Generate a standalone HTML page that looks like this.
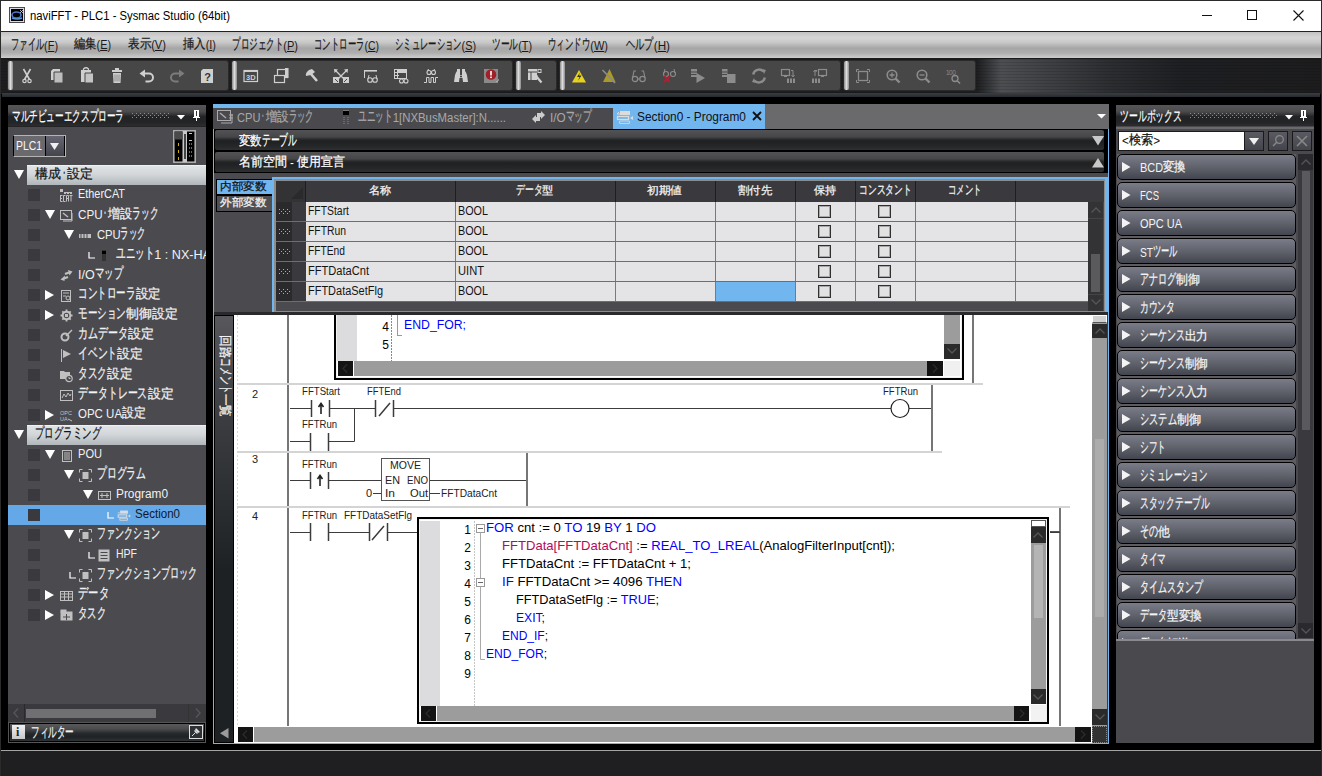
<!DOCTYPE html><html><head><meta charset='utf-8'><style>
*{box-sizing:border-box;margin:0;padding:0}
html,body{width:1322px;height:776px;overflow:hidden;background:#000;font-family:"Liberation Sans",sans-serif;font-size:12px}
.a{position:absolute}
.t{position:absolute;white-space:pre}
svg{position:absolute;overflow:visible}
</style></head><body>
<div class='a' style='left:0px;top:0px;width:1322px;height:31px;background:#fff'></div>
<div class='a' style='left:0px;top:0px;width:1322px;height:1px;background:#2b2b2b'></div>
<div class='a' style='left:0px;top:0px;width:1px;height:776px;background:#2b2b2b'></div>
<div class='a' style='left:1321px;top:0px;width:1px;height:776px;background:#2b2b2b'></div>
<svg style='left:9px;top:7px' width='16' height='16'><rect x='0.5' y='0.5' width='15' height='15' fill='#d8d8e0' stroke='#4a4a50'/><rect x='2' y='2' width='12' height='12' fill='#000'/><ellipse cx='7.5' cy='8' rx='4.5' ry='3' fill='none' stroke='#4a7ac8' stroke-width='1.6'/><path d='M3 11 Q8 13 13 11' stroke='#5a9ad8' stroke-width='1.5' fill='none'/><path d='M11 3 L14 6 M14 3 L11 6' stroke='#ddd' stroke-width='0.8'/></svg>
<div class='a' style='left:1202px;top:15px;width:10px;height:1px;background:#111'></div>
<div class='a' style='left:1247px;top:10px;width:10px;height:10px;border:1px solid #111'></div>
<svg style='left:1293px;top:10px' width='11' height='11'><path d='M0.5 0.5 L10.5 10.5 M10.5 0.5 L0.5 10.5' stroke='#111' stroke-width='1.1'/></svg>
<div class='a' style='left:1px;top:31px;width:1320px;height:1px;background:#222'></div>
<div class='a' style='left:1px;top:32px;width:1320px;height:26px;background:linear-gradient(#c2c2c2 0%,#d6d6d6 22%,#c8c8c8 40%,#a6a6a6 62%,#aeaeae 80%,#cdcdcd 100%)'></div>
<div class='a' style='left:1px;top:58px;width:1320px;height:1px;background:#1a1a1a'></div>
<div class='a' style='left:1px;top:59px;width:1320px;height:35px;background:repeating-linear-gradient(rgba(0,0,0,0.12) 0 1px,transparent 1px 3px),linear-gradient(90deg,#1e1e20 0px,#1e1e20 976px,#4c4e52 1000px,#404246 1040px,#2c2d30 1110px,#1e1f22 1180px,#1c1c1e 1322px)'></div>
<div class='a' style='left:7px;top:60px;width:222px;height:31px;background:#474747;border:1px solid #2a2a2a;border-radius:3px'></div>
<div class='a' style='left:8px;top:61px;width:5px;height:29px;background:linear-gradient(90deg,#8a8a8a,#dcdcdc 50%,#8a8a8a);border-radius:2px'></div>
<div class='a' style='left:231px;top:60px;width:282px;height:31px;background:#474747;border:1px solid #2a2a2a;border-radius:3px'></div>
<div class='a' style='left:232px;top:61px;width:5px;height:29px;background:linear-gradient(90deg,#8a8a8a,#dcdcdc 50%,#8a8a8a);border-radius:2px'></div>
<div class='a' style='left:515px;top:60px;width:42px;height:31px;background:#474747;border:1px solid #2a2a2a;border-radius:3px'></div>
<div class='a' style='left:516px;top:61px;width:5px;height:29px;background:linear-gradient(90deg,#8a8a8a,#dcdcdc 50%,#8a8a8a);border-radius:2px'></div>
<div class='a' style='left:559px;top:60px;width:282px;height:31px;background:#474747;border:1px solid #2a2a2a;border-radius:3px'></div>
<div class='a' style='left:560px;top:61px;width:5px;height:29px;background:linear-gradient(90deg,#8a8a8a,#dcdcdc 50%,#8a8a8a);border-radius:2px'></div>
<div class='a' style='left:843px;top:60px;width:133px;height:31px;background:#474747;border:1px solid #2a2a2a;border-radius:3px'></div>
<div class='a' style='left:844px;top:61px;width:5px;height:29px;background:linear-gradient(90deg,#8a8a8a,#dcdcdc 50%,#8a8a8a);border-radius:2px'></div>
<div class='a' style='left:2px;top:93px;width:1318px;height:4px;background:linear-gradient(#3a3e42,#262a2e)'></div>
<svg style='left:17px;top:66px' width='20' height='20'><path d='M6.5 3 L12.5 13.5 M13.5 3 L7.5 13.5' stroke='#cfcfcf' stroke-width='1.6'/><circle cx='7.5' cy='15' r='1.7' fill='none' stroke='#cfcfcf' stroke-width='1.2'/><circle cx='12.5' cy='15' r='1.7' fill='none' stroke='#cfcfcf' stroke-width='1.2'/></svg>
<svg style='left:47px;top:66px' width='20' height='20'><path d='M6 3 H13 V14 H4 V5 Z' fill='#cfcfcf'/><path d='M7 6 H16 V17 H7 Z' fill='#bdbdbd' stroke='#474747' stroke-width='1'/></svg>
<svg style='left:77px;top:66px' width='20' height='20'><path d='M4 4 H14 V16 H4 Z' fill='#cfcfcf'/><path d='M6.5 3 Q9 0.5 11.5 3 V5 H6.5 Z' fill='none' stroke='#cfcfcf' stroke-width='1.2'/><path d='M8 7 H16.5 V17 H8 Z' fill='#c4c4c4' stroke='#474747'/></svg>
<svg style='left:107px;top:66px' width='20' height='20'><rect x='5' y='4' width='10' height='2' fill='#cfcfcf'/><rect x='8' y='2' width='4' height='2' fill='#cfcfcf'/><path d='M6 7 H14 L13.5 17 H6.5 Z' fill='#cfcfcf'/><path d='M8 8.5 V15.5 M10 8.5 V15.5 M12 8.5 V15.5' stroke='#8a8a8a'/></svg>
<svg style='left:137px;top:66px' width='20' height='20'><path d='M2.5 7.5 L8 3.5 V11.5 Z' fill='#cfcfcf'/><path d='M7 7.5 H12 A4 4 0 0 1 12 15.5 H8.5' stroke='#cfcfcf' stroke-width='2' fill='none'/></svg>
<svg style='left:167px;top:66px' width='20' height='20'><path d='M17.5 7.5 L12 3.5 V11.5 Z' fill='#7c7c7c'/><path d='M13 7.5 H8 A4 4 0 0 0 8 15.5 H11.5' stroke='#7c7c7c' stroke-width='2' fill='none'/></svg>
<svg style='left:197px;top:66px' width='20' height='20'><path d='M6 3 H16 V17 H4 V5 Z' fill='#cfcfcf'/><text x='10.5' y='15' font-size='11' font-weight='bold' text-anchor='middle' fill='#333' font-family='Liberation Sans'>?</text></svg>
<svg style='left:241px;top:66px' width='20' height='20'><rect x='3' y='4.5' width='13.5' height='11' fill='none' stroke='#cfcfcf' stroke-width='1.2'/><rect x='3' y='4' width='14' height='2' fill='#cfcfcf'/><text x='9.8' y='14.3' font-size='7.5' font-weight='bold' text-anchor='middle' fill='#cfcfcf' font-family='Liberation Sans'>3D</text></svg>
<svg style='left:271px;top:66px' width='20' height='20'><rect x='6.5' y='3.5' width='10' height='8' fill='none' stroke='#cfcfcf' stroke-width='1.2'/><rect x='3.5' y='9.5' width='10' height='7' fill='#474747' stroke='#cfcfcf' stroke-width='1.2'/><rect x='14' y='2' width='3.5' height='10' fill='#cfcfcf'/></svg>
<svg style='left:301px;top:66px' width='20' height='20'><path d='M5 10 Q4 7 8 4 L11 3 L14 6 L10 9 Z' fill='#cfcfcf'/><path d='M10 8 L16 15' stroke='#cfcfcf' stroke-width='2.6'/></svg>
<svg style='left:331px;top:66px' width='20' height='20'><path d='M4 4 L16 16 M16 4 L4 16' stroke='#cfcfcf' stroke-width='1.3'/><path d='M3 3 L7 3.5 L3.5 7 Z M17 3 L13 3.5 L16.5 7 Z' fill='#cfcfcf'/><rect x='2' y='11' width='6' height='6' fill='#cfcfcf'/><rect x='12' y='11' width='6' height='6' fill='#cfcfcf'/><path d='M4 13 L7 16 M16 13 L13 16' stroke='#474747'/></svg>
<svg style='left:361px;top:66px' width='20' height='20'><rect x='3' y='4' width='13' height='1.6' fill='#cfcfcf'/><path d='M3.5 4 V12' stroke='#cfcfcf'/><circle cx='9' cy='14' r='2.3' fill='none' stroke='#cfcfcf' stroke-width='1.1'/><circle cx='14' cy='14' r='2.3' fill='none' stroke='#cfcfcf' stroke-width='1.1'/><path d='M7 13 L8 9 M16 13 L15 9' stroke='#cfcfcf'/></svg>
<svg style='left:391px;top:66px' width='20' height='20'><rect x='3.5' y='3.5' width='12' height='9' fill='none' stroke='#cfcfcf'/><path d='M3.5 6.5 H15.5 M3.5 9.5 H8 M6.5 3.5 V12.5' stroke='#cfcfcf'/><rect x='7' y='4' width='8.5' height='2' fill='#cfcfcf'/><circle cx='10.5' cy='15' r='2' fill='#474747' stroke='#cfcfcf' stroke-width='1.1'/><circle cx='15' cy='15' r='2' fill='#474747' stroke='#cfcfcf' stroke-width='1.1'/></svg>
<svg style='left:421px;top:66px' width='20' height='20'><circle cx='8' cy='6.5' r='2' fill='none' stroke='#cfcfcf' stroke-width='1.1'/><circle cx='12.5' cy='6.5' r='2' fill='none' stroke='#cfcfcf' stroke-width='1.1'/><path d='M6.5 5 L7.5 3 M14 5 L13 3' stroke='#cfcfcf'/><path d='M3 16.5 H5.5 V11.5 H8 V16.5 H10 V11.5 H12.5 V16.5 H14.5 V11.5 H17' stroke='#cfcfcf' fill='none'/></svg>
<svg style='left:451px;top:66px' width='20' height='20'><path d='M3 16 L4 9 Q5 6 6 5 V3 H9 V9 H11 V3 H14 V5 Q15 6 16 9 L17 16 H12 L11.5 12 H8.5 L8 16 Z' fill='#cfcfcf'/><circle cx='10' cy='10.5' r='1' fill='#333'/></svg>
<svg style='left:481px;top:66px' width='20' height='20'><rect x='3' y='3' width='14' height='14' fill='#8a8a8a'/><circle cx='10' cy='8.5' r='5.3' fill='#a0202a'/><rect x='9.2' y='5' width='1.6' height='4.5' fill='#fff'/><rect x='9.2' y='10.5' width='1.6' height='1.6' fill='#fff'/><path d='M15 15 h2 v-2' stroke='#ccc'/></svg>
<svg style='left:525px;top:66px' width='20' height='20'><rect x='3' y='3' width='9' height='11' fill='#cfcfcf'/><path d='M3 6 H12 M6 6 V14' stroke='#474747'/><rect x='13' y='3.5' width='3' height='3' fill='none' stroke='#cfcfcf'/><path d='M7 13 Q8 10 11 8 L13 10 L10 12 Z' fill='#cfcfcf'/><path d='M11 10 L16.5 16.5' stroke='#cfcfcf' stroke-width='2.2'/></svg>
<svg style='left:569px;top:66px' width='20' height='20'><path d='M10 4 L17 16.5 H3 Z' fill='#e8d21e'/><path d='M11 6.5 L8 11 H10.5 L9 15 L12.5 9.5 H10 Z' fill='#333'/></svg>
<svg style='left:599px;top:66px' width='20' height='20'><path d='M10.5 3 L16.5 16 H4 Z' fill='#aa9a2a'/><path d='M3.5 4 L16 17' stroke='#8a8a8a' stroke-width='1.8'/></svg>
<svg style='left:629px;top:66px' width='20' height='20'><circle cx='6' cy='13' r='2.7' fill='none' stroke='#8c8c8c' stroke-width='1.2'/><circle cx='13.5' cy='13' r='2.7' fill='none' stroke='#8c8c8c' stroke-width='1.2'/><path d='M8.7 13 H10.8 M3.5 12 L5 5 H7 M16 12 L14.5 5 H12.5' stroke='#8c8c8c' fill='none' stroke-width='1.1'/></svg>
<svg style='left:659px;top:66px' width='20' height='20'><circle cx='7' cy='8' r='2.5' fill='none' stroke='#8c8c8c' stroke-width='1.1'/><circle cx='14' cy='8' r='2.5' fill='none' stroke='#8c8c8c' stroke-width='1.1'/><path d='M5 7 L6 3 M16 7 L15 3' stroke='#8c8c8c'/><path d='M5 10 L11 16 M11 10 L5 16' stroke='#b02030' stroke-width='1.8'/></svg>
<svg style='left:689px;top:66px' width='20' height='20'><rect x='2' y='3' width='6' height='8' fill='#8c8c8c'/><path d='M2 6 H8 M2 8.5 H8' stroke='#474747'/><path d='M7.5 7 L16 12 L7.5 17 Z' fill='#8c8c8c'/></svg>
<svg style='left:719px;top:66px' width='20' height='20'><rect x='3' y='3' width='5.5' height='8' fill='#8c8c8c'/><path d='M3 6 H8.5 M3 8.5 H8.5' stroke='#474747'/><rect x='8' y='8' width='8.5' height='9' fill='#8c8c8c'/></svg>
<svg style='left:749px;top:66px' width='20' height='20'><path d='M4.2 8.5 A6 6 0 0 1 14.5 5.5' stroke='#8c8c8c' stroke-width='2.4' fill='none'/><path d='M15.8 11.5 A6 6 0 0 1 5.5 14.5' stroke='#8c8c8c' stroke-width='2.4' fill='none'/><path d='M13 3 L17 4 L15 8 Z M7 17 L3 16 L5 12 Z' fill='#8c8c8c'/></svg>
<svg style='left:779px;top:66px' width='20' height='20'><rect x='2.5' y='3.5' width='8' height='6' fill='none' stroke='#8c8c8c' stroke-width='1.2'/><path d='M5 10.5 H8' stroke='#8c8c8c'/><path d='M12 4.5 H14 V10' stroke='#8c8c8c' fill='none'/><path d='M12.5 9 L14 11 L15.5 9' stroke='#8c8c8c' fill='none'/><path d='M8 12.5 h2 v4.5 h-2z M11 12.5 h2 v4.5 h-2z M14 12.5 h2 v4.5 h-2z' fill='#8c8c8c'/></svg>
<svg style='left:809px;top:66px' width='20' height='20'><rect x='9.5' y='3.5' width='8' height='6' fill='none' stroke='#8c8c8c' stroke-width='1.2'/><path d='M12 10.5 H15' stroke='#8c8c8c'/><path d='M8 4.5 H6 V10' stroke='#8c8c8c' fill='none'/><path d='M4.5 6 L6 4 L7.5 6' stroke='#8c8c8c' fill='none'/><path d='M3 12.5 h2 v4.5 h-2z M6 12.5 h2 v4.5 h-2z M9 12.5 h2 v4.5 h-2z' fill='#8c8c8c'/></svg>
<svg style='left:853px;top:66px' width='20' height='20'><rect x='5.5' y='5.5' width='9' height='9' fill='none' stroke='#8c8c8c' stroke-width='1.3'/><path d='M3.5 6 V3.5 H6 M14 3.5 H16.5 V6 M16.5 14 V16.5 H14 M6 16.5 H3.5 V14' stroke='#8c8c8c' fill='none'/></svg>
<svg style='left:883px;top:66px' width='20' height='20'><circle cx='9' cy='9' r='4.8' fill='none' stroke='#8c8c8c' stroke-width='1.6'/><path d='M12.5 12.5 L16.5 16.5' stroke='#8c8c8c' stroke-width='2.4'/><path d='M6.5 9 H11.5 M9 6.5 V11.5' stroke='#8c8c8c' stroke-width='1.3'/></svg>
<svg style='left:913px;top:66px' width='20' height='20'><circle cx='9' cy='9' r='4.8' fill='none' stroke='#8c8c8c' stroke-width='1.6'/><path d='M12.5 12.5 L16.5 16.5' stroke='#8c8c8c' stroke-width='2.4'/><path d='M6.5 9 H11.5' stroke='#8c8c8c' stroke-width='1.3'/></svg>
<svg style='left:943px;top:66px' width='20' height='20'><text x='3' y='8.5' font-size='6.5' fill='#8c8c8c' font-family='Liberation Sans' letter-spacing='-0.5'>100</text><circle cx='12' cy='12.5' r='3' fill='none' stroke='#8c8c8c' stroke-width='1.3'/><path d='M14 14.5 L17 17.5' stroke='#8c8c8c' stroke-width='1.6'/></svg>
<div class='a' style='left:8px;top:105px;width:198px;height:638px;background:#4b4a4f'></div>
<div class='a' style='left:8px;top:105px;width:198px;height:21px;background:linear-gradient(#565658 0%,#4c4c4e 30%,#3a3a3c 42%,#222426 55%,#222426 80%,#2a2c2e 100%)'></div>
<svg style='left:132px;top:113px' width='38' height='6'><path d='M0 0.5h1M4 0.5h1M8 0.5h1M12 0.5h1M16 0.5h1M20 0.5h1M24 0.5h1M28 0.5h1M32 0.5h1M36 0.5h1M2 2.5h1M6 2.5h1M10 2.5h1M14 2.5h1M18 2.5h1M22 2.5h1M26 2.5h1M30 2.5h1M34 2.5h1M0 4.5h1M4 4.5h1M8 4.5h1M12 4.5h1M16 4.5h1M20 4.5h1M24 4.5h1M28 4.5h1M32 4.5h1M36 4.5h1' stroke='#8c8c8e' stroke-width='1'/></svg>
<svg style='left:177px;top:115px' width='9' height='5'><path d='M0 0 H8 L4 4.5 Z' fill='#fff'/></svg>
<svg style='left:193px;top:110px' width='8' height='11'><rect x='1' y='0' width='5' height='7' fill='#fff'/><path d='M3.5 1 V6' stroke='#333'/><path d='M0 7.5 H7 M3.5 7 V11' stroke='#fff'/></svg>
<div class='a' style='left:8px;top:126px;width:198px;height:1px;background:#242426'></div>
<div class='a' style='left:13px;top:135px;width:53px;height:22px;background:#6a6a6e;border:1px solid #b4b4b4;border-left:1px solid #000'></div>
<div class='a' style='left:45px;top:136px;width:20px;height:20px;background:linear-gradient(#666672,#44444e);border-left:1px solid #000;border-right:1px solid #000'></div>
<svg style='left:50px;top:143px' width='9' height='7'><path d='M0 0 H9 L4.5 7 Z' fill='#f0f0f0'/></svg>
<svg style='left:173px;top:130px' width='23' height='33'><rect x='0.5' y='0.5' width='22' height='32' fill='#c8c8c8' stroke='#aaa'/><rect x='1.5' y='1.5' width='8' height='30' fill='#000'/><rect x='1.5' y='1.5' width='8' height='8' fill='#4a4a4a'/><rect x='14' y='1.5' width='7.5' height='30' fill='#000'/><rect x='11' y='4' width='2' height='25' fill='#444'/><rect x='5' y='13' width='1' height='3' fill='#d0b000'/><rect x='5' y='20' width='1' height='3' fill='#d0b000'/><rect x='5' y='27' width='1' height='3' fill='#d0b000'/><rect x='16' y='3' width='3' height='1' fill='#ccc'/><rect x='16' y='10' width='3' height='1' fill='#ccc'/><path d='M16 14 h1 M18 14 h1 M16 18 h1 M18 18 h1 M16 22 h1 M18 22 h1 M16 26 h1 M18 26 h1' stroke='#ccc'/></svg>
<div class='a' style='left:27px;top:165px;width:179px;height:20px;background:linear-gradient(#dfe3e6 0%,#d2d6d9 45%,#b0b6ba 100%);border-top:1px solid #eef0f2'></div>
<svg style='left:14px;top:170px' width='10' height='10'><path d='M0 0 H10 L5 9 Z' fill='#fff'/></svg>
<div class='a' style='left:27px;top:425px;width:179px;height:20px;background:linear-gradient(#dfe3e6 0%,#d2d6d9 45%,#b0b6ba 100%);border-top:1px solid #eef0f2'></div>
<svg style='left:14px;top:430px' width='10' height='10'><path d='M0 0 H10 L5 9 Z' fill='#fff'/></svg>
<div class='a' style='left:28px;top:189px;width:12px;height:12px;background:#3a3a3e'></div>
<svg style='left:60px;top:189px' width='13' height='13'><path d='M0 0.5h3M0 1.5h3M0 2.5h3M4 3.5h8M4 4.5h2M7 4.5h2M10 4.5h2' stroke='#c0c0c0'/><path d='M0.5 6v6.5h2M0.5 6.5h2M0.5 9.5h1.5M5.5 6.5h-2v6h2M6.5 12.5v-6h2v6M6.5 9.5h2M9.5 6.5h3M11 6.5v6' stroke='#c0c0c0' fill='none'/></svg>
<div class='a' style='left:28px;top:209px;width:12px;height:12px;background:#3a3a3e'></div>
<svg style='left:45px;top:210px' width='10' height='10'><path d='M0 0 H10 L5 9 Z' fill='#fff'/></svg>
<svg style='left:60px;top:209px' width='13' height='13'><rect x='0.5' y='1.5' width='11' height='9' fill='none' stroke='#c0c0c0'/><path d='M3 4 L8 8' stroke='#c0c0c0' stroke-width='1.5'/><path d='M12 4 V12 H3' stroke='#c0c0c0' fill='none'/></svg>
<div class='a' style='left:28px;top:229px;width:12px;height:12px;background:#3a3a3e'></div>
<svg style='left:64px;top:230px' width='10' height='10'><path d='M0 0 H10 L5 9 Z' fill='#fff'/></svg>
<svg style='left:79px;top:229px' width='13' height='13'><rect x='0' y='5' width='12' height='4' fill='#c0c0c0'/><path d='M2 5 V9 M5 5 V9 M8 5 V9' stroke='#4a4a4e'/></svg>
<div class='a' style='left:28px;top:249px;width:12px;height:12px;background:#3a3a3e'></div>
<svg style='left:88px;top:252px' width='8' height='7'><path d='M1 0 V6 H7' stroke='#fff' fill='none' stroke-width='1.2'/></svg>
<svg style='left:101px;top:249px' width='13' height='13'><rect x='1' y='1' width='4' height='11' fill='#333'/><rect x='1' y='2' width='4' height='3' fill='#000'/></svg>
<div class='a' style='left:28px;top:269px;width:12px;height:12px;background:#3a3a3e'></div>
<svg style='left:60px;top:269px' width='13' height='13'><path d='M5 5 L9 3.5' stroke='#c0c0c0' stroke-width='2.2'/><path d='M8 1 L12.5 2.5 L9.5 6.5 Z' fill='#c0c0c0'/><path d='M8 8 L4 9.5' stroke='#c0c0c0' stroke-width='2.2'/><path d='M5 6.5 L0.5 10.5 L4.5 12 Z' fill='#c0c0c0'/></svg>
<div class='a' style='left:28px;top:289px;width:12px;height:12px;background:#3a3a3e'></div>
<svg style='left:45px;top:290px' width='10' height='10'><path d='M0 0 V10 L9 5 Z' fill='#fff'/></svg>
<svg style='left:60px;top:289px' width='13' height='13'><rect x='1.5' y='1.5' width='9' height='11' fill='none' stroke='#c0c0c0'/><path d='M3 4 H9 M3 7 H6' stroke='#c0c0c0'/><circle cx='8' cy='9' r='2' fill='none' stroke='#c0c0c0'/></svg>
<div class='a' style='left:28px;top:309px;width:12px;height:12px;background:#3a3a3e'></div>
<svg style='left:45px;top:310px' width='10' height='10'><path d='M0 0 V10 L9 5 Z' fill='#fff'/></svg>
<svg style='left:60px;top:309px' width='13' height='13'><circle cx='6.5' cy='6.5' r='3.8' fill='none' stroke='#c0c0c0' stroke-width='2'/><path d='M6.5 0.5v2.5M6.5 10v2.5M0.5 6.5h2.5M10 6.5h2.5M2.3 2.3l1.8 1.8M8.9 8.9l1.8 1.8M2.3 10.7l1.8-1.8M8.9 4.1l1.8-1.8' stroke='#c0c0c0' stroke-width='1.8'/><rect x='5' y='5' width='3' height='3' fill='#c0c0c0'/></svg>
<div class='a' style='left:28px;top:329px;width:12px;height:12px;background:#3a3a3e'></div>
<svg style='left:60px;top:329px' width='13' height='13'><circle cx='5' cy='8' r='3.5' fill='none' stroke='#c0c0c0' stroke-width='2'/><path d='M6 7 L12 1' stroke='#c0c0c0' stroke-width='1.5'/></svg>
<div class='a' style='left:28px;top:349px;width:12px;height:12px;background:#3a3a3e'></div>
<svg style='left:60px;top:349px' width='13' height='13'><path d='M1.5 0 V13' stroke='#c0c0c0'/><path d='M3 1 L11 5 L3 9 Z' fill='#c0c0c0'/></svg>
<div class='a' style='left:28px;top:369px;width:12px;height:12px;background:#3a3a3e'></div>
<svg style='left:60px;top:369px' width='13' height='13'><path d='M0 2 H4 L5 3 H10 V10 H0 Z' fill='#c0c0c0'/><circle cx='9' cy='9.5' r='3.2' fill='#4b4a4f' stroke='#c0c0c0' stroke-width='1.2'/><path d='M9 8 V9.5 H10.5' stroke='#c0c0c0' fill='none'/></svg>
<div class='a' style='left:28px;top:389px;width:12px;height:12px;background:#3a3a3e'></div>
<svg style='left:60px;top:389px' width='13' height='13'><rect x='0.5' y='1.5' width='12' height='10' fill='none' stroke='#c0c0c0'/><path d='M2 9 L4 5 L6 8 L8 4 L10 7 L11 5' stroke='#c0c0c0' fill='none'/></svg>
<div class='a' style='left:28px;top:409px;width:12px;height:12px;background:#3a3a3e'></div>
<svg style='left:45px;top:410px' width='10' height='10'><path d='M0 0 V10 L9 5 Z' fill='#fff'/></svg>
<svg style='left:60px;top:409px' width='13' height='13'><text x='0' y='6' font-size='5.5' fill='#c0c0c0' font-family='Liberation Sans'>OPC</text><text x='0' y='12' font-size='5.5' fill='#c0c0c0' font-family='Liberation Sans'>UA</text><path d='M8 10 L12 12' stroke='#c0c0c0'/></svg>
<div class='a' style='left:28px;top:449px;width:12px;height:12px;background:#3a3a3e'></div>
<svg style='left:45px;top:450px' width='10' height='10'><path d='M0 0 H10 L5 9 Z' fill='#fff'/></svg>
<svg style='left:60px;top:449px' width='13' height='13'><rect x='2.5' y='1.5' width='9' height='11' fill='none' stroke='#c0c0c0'/><path d='M4 4 H10 M4 6 H10 M4 8 H10 M4 10 H10' stroke='#c0c0c0'/></svg>
<div class='a' style='left:28px;top:469px;width:12px;height:12px;background:#3a3a3e'></div>
<svg style='left:64px;top:470px' width='10' height='10'><path d='M0 0 H10 L5 9 Z' fill='#fff'/></svg>
<svg style='left:79px;top:469px' width='13' height='13'><path d='M0.5 3.5 V0.5 H3.5 M9.5 0.5 H12.5 V3.5 M12.5 9.5 V12.5 H9.5 M3.5 12.5 H0.5 V9.5' stroke='#c0c0c0' fill='none'/><rect x='3.5' y='3' width='6' height='7' fill='#c0c0c0'/></svg>
<div class='a' style='left:28px;top:489px;width:12px;height:12px;background:#3a3a3e'></div>
<svg style='left:83px;top:490px' width='10' height='10'><path d='M0 0 H10 L5 9 Z' fill='#fff'/></svg>
<svg style='left:98px;top:489px' width='13' height='13'><rect x='0.5' y='2.5' width='12' height='8' fill='none' stroke='#c0c0c0'/><path d='M2 6.5 H11 M4 4 V9 M9 4 V9' stroke='#c0c0c0'/></svg>
<div class='a' style='left:28px;top:529px;width:12px;height:12px;background:#3a3a3e'></div>
<svg style='left:64px;top:530px' width='10' height='10'><path d='M0 0 H10 L5 9 Z' fill='#fff'/></svg>
<svg style='left:79px;top:529px' width='13' height='13'><path d='M0.5 3.5 V0.5 H3.5 M9.5 0.5 H12.5 V3.5 M12.5 9.5 V12.5 H9.5 M3.5 12.5 H0.5 V9.5' stroke='#c0c0c0' fill='none'/><rect x='3.5' y='3' width='6' height='7' fill='#c0c0c0'/></svg>
<div class='a' style='left:28px;top:549px;width:12px;height:12px;background:#3a3a3e'></div>
<svg style='left:88px;top:552px' width='8' height='7'><path d='M1 0 V6 H7' stroke='#fff' fill='none' stroke-width='1.2'/></svg>
<svg style='left:98px;top:549px' width='13' height='13'><rect x='0.5' y='0.5' width='11' height='12' fill='#c0c0c0'/><path d='M2.5 3.5 H9.5 M2.5 6.5 H9.5 M2.5 9.5 H9.5' stroke='#4a4a4e'/></svg>
<div class='a' style='left:28px;top:569px;width:12px;height:12px;background:#3a3a3e'></div>
<svg style='left:69px;top:572px' width='8' height='7'><path d='M1 0 V6 H7' stroke='#fff' fill='none' stroke-width='1.2'/></svg>
<svg style='left:79px;top:569px' width='13' height='13'><path d='M0.5 3.5 V0.5 H3.5 M9.5 0.5 H12.5 V3.5 M12.5 9.5 V12.5 H9.5 M3.5 12.5 H0.5 V9.5' stroke='#c0c0c0' fill='none'/><rect x='3.5' y='3' width='6' height='7' fill='#c0c0c0'/></svg>
<div class='a' style='left:28px;top:589px;width:12px;height:12px;background:#3a3a3e'></div>
<svg style='left:45px;top:590px' width='10' height='10'><path d='M0 0 V10 L9 5 Z' fill='#fff'/></svg>
<svg style='left:60px;top:589px' width='13' height='13'><rect x='0.5' y='2.5' width='12' height='9' fill='none' stroke='#c0c0c0'/><path d='M0.5 5 H12.5 M0.5 8 H12.5 M4.5 2.5 V11.5 M8.5 2.5 V11.5' stroke='#c0c0c0'/></svg>
<div class='a' style='left:28px;top:609px;width:12px;height:12px;background:#3a3a3e'></div>
<svg style='left:45px;top:610px' width='10' height='10'><path d='M0 0 V10 L9 5 Z' fill='#fff'/></svg>
<svg style='left:60px;top:609px' width='13' height='13'><rect x='0.5' y='2.5' width='12' height='9' fill='#c0c0c0'/><rect x='0.5' y='0.5' width='6' height='3' fill='#c0c0c0'/><path d='M6.5 5 V11 M3 8 H10' stroke='#4a4a4e'/></svg>
<div class='a' style='left:8px;top:505px;width:198px;height:20px;background:#64a8e8'></div>
<div class='a' style='left:28px;top:509px;width:12px;height:12px;background:#3a3a3e'></div>
<svg style='left:107px;top:512px' width='8' height='7'><path d='M1 0 V6 H7' stroke='#fff' fill='none' stroke-width='1.2'/></svg>
<svg style='left:117px;top:509px' width='13' height='13'><g transform='scale(0.78)'><rect x='4' y='2' width='10' height='4' fill='#d8dde2'/><path d='M1 5 H4' stroke='#d8dde2'/><rect x='1.5' y='7.5' width='11' height='3' fill='none' stroke='#d8dde2' stroke-width='1.3'/><path d='M17 7 V11 L14 9 Z' fill='#d8dde2'/><rect x='3.5' y='12' width='10' height='2.5' rx='1' fill='none' stroke='#d0d4d8' stroke-width='1.3'/></g></svg>
<div class='a' style='left:8px;top:704px;width:198px;height:18px;background:#3a3a3e'></div>
<div class='a' style='left:24px;top:704px;width:1px;height:18px;background:#2a2a2e'></div>
<div class='a' style='left:26px;top:709px;width:130px;height:9px;background:#707072'></div>
<svg style='left:13px;top:708px' width='6' height='10'><path d='M5 0.5 L1 5 L5 9.5' stroke='#555' fill='none' stroke-width='1.5'/></svg>
<div class='a' style='left:188px;top:704px;width:1px;height:18px;background:#333'></div>
<svg style='left:195px;top:708px' width='6' height='10'><path d='M1 0.5 L5 5 L1 9.5' stroke='#555' fill='none' stroke-width='1.5'/></svg>
<div class='a' style='left:8px;top:722px;width:198px;height:21px;background:#000;border:1px solid #555'></div>
<div class='a' style='left:10px;top:724px;width:194px;height:17px;background:linear-gradient(#5a5a5c 0%,#4a4a4c 30%,#262a2c 55%,#1e2224 75%,#2e3234 100%)'></div>
<div class='a' style='left:12px;top:725px;width:13px;height:14px;background:linear-gradient(#f0f0f0,#c8c8c8)'></div>
<div class='a' style='left:189px;top:725px;width:14px;height:14px;border:1px solid #ddd;background:#2e3234'></div>
<svg style='left:191px;top:727px' width='10' height='10'><path d='M5 1 L9 5 L7 6 L4 3 Z' fill='#ddd'/><path d='M4 3 L7 6 L6 7 L3 4Z' fill='#ddd'/><path d='M1 9 L4.5 5.5' stroke='#ddd'/></svg>
<div class='a' style='left:1px;top:750px;width:1320px;height:1px;background:#a4a4a4'></div>
<div class='a' style='left:1px;top:775px;width:1320px;height:1px;background:#2a2a2e'></div>
<div class='a' style='left:1px;top:751px;width:1320px;height:25px;background:#1f1f21'></div>
<div class='a' style='left:213px;top:104px;width:896px;height:640px;background:#000'></div>
<div class='a' style='left:213px;top:104px;width:552px;height:4px;background:#72b6f0'></div>
<div class='a' style='left:213px;top:108px;width:400px;height:21px;background:#4a4a4e'></div>
<div class='a' style='left:613px;top:104px;width:152px;height:25px;background:#72b6f0'></div>
<div class='a' style='left:765px;top:104px;width:344px;height:25px;background:#6a6a6c'></div>
<svg style='left:1097px;top:114px' width='9' height='5'><path d='M0 0 H9 L4.5 4.5 Z' fill='#fff'/></svg>
<svg style='left:217px;top:109px' width='17' height='16'><rect x='0.5' y='1.5' width='13' height='10' fill='none' stroke='#aaa'/><path d='M3 4 L9 9' stroke='#aaa' stroke-width='1.5'/><path d='M15 5 V14 H4' stroke='#aaa' fill='none'/><path d='M12 6 H16 M12 9 H16' stroke='#aaa'/></svg>
<svg style='left:343px;top:110px' width='6' height='15'><rect x='0' y='0' width='6' height='1' fill='#777'/><rect x='0' y='1' width='6' height='4' fill='#000'/><path d='M0 7.5h2M4 7.5h2M0 9.5h2M4 9.5h2M0 11.5h2M4 11.5h2M0 13.5h2M4 13.5h2' stroke='#6a6a6a'/></svg>
<svg style='left:531px;top:110px' width='15' height='14'><path d='M1 9 L5 13 V11 H9 V7 H5 V5 Z' fill='#ccc'/><path d='M14 5 L10 1 V3 H6 V7 H10 V9 Z' fill='#ccc'/></svg>
<svg style='left:616px;top:109px' width='18' height='16'><rect x='4' y='2' width='10' height='4' fill='#dcdcdc'/><path d='M1 5 H4 M3 3 L1 5' stroke='#dcdcdc'/><rect x='1.5' y='7.5' width='11' height='3' fill='none' stroke='#dcdcdc' stroke-width='1.2'/><path d='M17 7 V11 L14 9 Z' fill='#dcdcdc'/><rect x='3.5' y='12' width='10' height='2.5' rx='1' fill='none' stroke='#d0d0d0' stroke-width='1.2'/></svg>
<svg style='left:752px;top:111px' width='10' height='10'><path d='M1 1 L9 9 M9 1 L1 9' stroke='#111' stroke-width='1.8'/></svg>
<div class='a' style='left:213px;top:129px;width:896px;height:615px;background:#3c3c40;border-left:1px solid #72b6f0;border-right:1px solid #72b6f0;border-bottom:1px solid #72b6f0'></div>
<div class='a' style='left:214px;top:129px;width:894px;height:44px;background:#000'></div>
<div class='a' style='left:215px;top:130px;width:889px;height:20px;background:linear-gradient(#535355 0%,#464648 35%,#2a2c2e 45%,#1e2022 55%,#26282a 85%,#2e3032 100%);border-radius:2px'></div>
<svg style='left:1092px;top:136px' width='12' height='10'><path d='M0 0 H12 L6 9.5 Z' fill='#c8c8c8'/></svg>
<div class='a' style='left:215px;top:152px;width:889px;height:20px;background:linear-gradient(#535355 0%,#464648 35%,#2a2c2e 45%,#1e2022 55%,#26282a 85%,#2e3032 100%);border-radius:2px'></div>
<svg style='left:1092px;top:158px' width='12' height='10'><path d='M0 9.5 H12 L6 0 Z' fill='#c8c8c8'/></svg>
<div class='a' style='left:214px;top:173px;width:894px;height:139px;background:#4b4a4f'></div>
<div class='a' style='left:216px;top:179px;width:57px;height:33px;background:#000'></div>
<div class='a' style='left:217px;top:180px;width:56px;height:14px;background:#72b6f0'></div>
<div class='a' style='left:217px;top:196px;width:55px;height:15px;background:#505054'></div>
<div class='a' style='left:272px;top:177px;width:836px;height:135px;background:#72b6f0'></div>
<div class='a' style='left:274px;top:179px;width:831px;height:133px;background:#8c8c8c'></div>
<div class='a' style='left:276px;top:181px;width:828px;height:130px;background:#4b4a4f'></div>
<div class='a' style='left:276px;top:181px;width:828px;height:21px;background:#3a3a3e'></div>
<div class='a' style='left:276px;top:181px;width:30px;height:21px;background:#333336'></div>
<svg style='left:290px;top:186px' width='14' height='14'><path d='M13 1 V13 H1 Z' fill='#2a2a2c'/></svg>
<div class='a' style='left:305px;top:181px;width:1px;height:21px;background:#1e1e20'></div>
<div class='a' style='left:455px;top:181px;width:1px;height:21px;background:#1e1e20'></div>
<div class='a' style='left:615px;top:181px;width:1px;height:21px;background:#1e1e20'></div>
<div class='a' style='left:715px;top:181px;width:1px;height:21px;background:#1e1e20'></div>
<div class='a' style='left:795px;top:181px;width:1px;height:21px;background:#1e1e20'></div>
<div class='a' style='left:855px;top:181px;width:1px;height:21px;background:#1e1e20'></div>
<div class='a' style='left:915px;top:181px;width:1px;height:21px;background:#1e1e20'></div>
<div class='a' style='left:1015px;top:181px;width:1px;height:21px;background:#1e1e20'></div>
<div class='a' style='left:276px;top:202px;width:16px;height:19px;background:#2a2a2c'></div>
<div class='a' style='left:292px;top:202px;width:14px;height:19px;background:#3a3a3e'></div>
<svg style='left:276px;top:202px' width='16' height='19'><path d='M3 7.5h1M7 7.5h1M11 7.5h1M5 9.5h1M9 9.5h1M13 9.5h1M3 11.5h1M7 11.5h1M11 11.5h1' stroke='#b0b0b0'/></svg>
<div class='a' style='left:306px;top:202px;width:782px;height:19px;background:#e4e4e6'></div>
<div class='a' style='left:276px;top:221px;width:812px;height:1px;background:#6e6e70'></div>
<div class='a' style='left:455px;top:202px;width:1px;height:19px;background:#7a7a7c'></div>
<div class='a' style='left:615px;top:202px;width:1px;height:19px;background:#7a7a7c'></div>
<div class='a' style='left:715px;top:202px;width:1px;height:19px;background:#7a7a7c'></div>
<div class='a' style='left:795px;top:202px;width:1px;height:19px;background:#7a7a7c'></div>
<div class='a' style='left:855px;top:202px;width:1px;height:19px;background:#7a7a7c'></div>
<div class='a' style='left:915px;top:202px;width:1px;height:19px;background:#7a7a7c'></div>
<div class='a' style='left:1015px;top:202px;width:1px;height:19px;background:#7a7a7c'></div>
<div class='a' style='left:818px;top:205px;width:13px;height:13px;border:1px solid #303030;box-shadow:inset 0 0 0 1px #a8a8a8;background:#e2e2e2'></div>
<div class='a' style='left:878px;top:205px;width:13px;height:13px;border:1px solid #303030;box-shadow:inset 0 0 0 1px #a8a8a8;background:#e2e2e2'></div>
<div class='a' style='left:276px;top:222px;width:16px;height:19px;background:#2a2a2c'></div>
<div class='a' style='left:292px;top:222px;width:14px;height:19px;background:#3a3a3e'></div>
<svg style='left:276px;top:222px' width='16' height='19'><path d='M3 7.5h1M7 7.5h1M11 7.5h1M5 9.5h1M9 9.5h1M13 9.5h1M3 11.5h1M7 11.5h1M11 11.5h1' stroke='#b0b0b0'/></svg>
<div class='a' style='left:306px;top:222px;width:782px;height:19px;background:#e4e4e6'></div>
<div class='a' style='left:276px;top:241px;width:812px;height:1px;background:#6e6e70'></div>
<div class='a' style='left:455px;top:222px;width:1px;height:19px;background:#7a7a7c'></div>
<div class='a' style='left:615px;top:222px;width:1px;height:19px;background:#7a7a7c'></div>
<div class='a' style='left:715px;top:222px;width:1px;height:19px;background:#7a7a7c'></div>
<div class='a' style='left:795px;top:222px;width:1px;height:19px;background:#7a7a7c'></div>
<div class='a' style='left:855px;top:222px;width:1px;height:19px;background:#7a7a7c'></div>
<div class='a' style='left:915px;top:222px;width:1px;height:19px;background:#7a7a7c'></div>
<div class='a' style='left:1015px;top:222px;width:1px;height:19px;background:#7a7a7c'></div>
<div class='a' style='left:818px;top:225px;width:13px;height:13px;border:1px solid #303030;box-shadow:inset 0 0 0 1px #a8a8a8;background:#e2e2e2'></div>
<div class='a' style='left:878px;top:225px;width:13px;height:13px;border:1px solid #303030;box-shadow:inset 0 0 0 1px #a8a8a8;background:#e2e2e2'></div>
<div class='a' style='left:276px;top:242px;width:16px;height:19px;background:#2a2a2c'></div>
<div class='a' style='left:292px;top:242px;width:14px;height:19px;background:#3a3a3e'></div>
<svg style='left:276px;top:242px' width='16' height='19'><path d='M3 7.5h1M7 7.5h1M11 7.5h1M5 9.5h1M9 9.5h1M13 9.5h1M3 11.5h1M7 11.5h1M11 11.5h1' stroke='#b0b0b0'/></svg>
<div class='a' style='left:306px;top:242px;width:782px;height:19px;background:#e4e4e6'></div>
<div class='a' style='left:276px;top:261px;width:812px;height:1px;background:#6e6e70'></div>
<div class='a' style='left:455px;top:242px;width:1px;height:19px;background:#7a7a7c'></div>
<div class='a' style='left:615px;top:242px;width:1px;height:19px;background:#7a7a7c'></div>
<div class='a' style='left:715px;top:242px;width:1px;height:19px;background:#7a7a7c'></div>
<div class='a' style='left:795px;top:242px;width:1px;height:19px;background:#7a7a7c'></div>
<div class='a' style='left:855px;top:242px;width:1px;height:19px;background:#7a7a7c'></div>
<div class='a' style='left:915px;top:242px;width:1px;height:19px;background:#7a7a7c'></div>
<div class='a' style='left:1015px;top:242px;width:1px;height:19px;background:#7a7a7c'></div>
<div class='a' style='left:818px;top:245px;width:13px;height:13px;border:1px solid #303030;box-shadow:inset 0 0 0 1px #a8a8a8;background:#e2e2e2'></div>
<div class='a' style='left:878px;top:245px;width:13px;height:13px;border:1px solid #303030;box-shadow:inset 0 0 0 1px #a8a8a8;background:#e2e2e2'></div>
<div class='a' style='left:276px;top:262px;width:16px;height:19px;background:#2a2a2c'></div>
<div class='a' style='left:292px;top:262px;width:14px;height:19px;background:#3a3a3e'></div>
<svg style='left:276px;top:262px' width='16' height='19'><path d='M3 7.5h1M7 7.5h1M11 7.5h1M5 9.5h1M9 9.5h1M13 9.5h1M3 11.5h1M7 11.5h1M11 11.5h1' stroke='#b0b0b0'/></svg>
<div class='a' style='left:306px;top:262px;width:782px;height:19px;background:#e4e4e6'></div>
<div class='a' style='left:276px;top:281px;width:812px;height:1px;background:#6e6e70'></div>
<div class='a' style='left:455px;top:262px;width:1px;height:19px;background:#7a7a7c'></div>
<div class='a' style='left:615px;top:262px;width:1px;height:19px;background:#7a7a7c'></div>
<div class='a' style='left:715px;top:262px;width:1px;height:19px;background:#7a7a7c'></div>
<div class='a' style='left:795px;top:262px;width:1px;height:19px;background:#7a7a7c'></div>
<div class='a' style='left:855px;top:262px;width:1px;height:19px;background:#7a7a7c'></div>
<div class='a' style='left:915px;top:262px;width:1px;height:19px;background:#7a7a7c'></div>
<div class='a' style='left:1015px;top:262px;width:1px;height:19px;background:#7a7a7c'></div>
<div class='a' style='left:818px;top:265px;width:13px;height:13px;border:1px solid #303030;box-shadow:inset 0 0 0 1px #a8a8a8;background:#e2e2e2'></div>
<div class='a' style='left:878px;top:265px;width:13px;height:13px;border:1px solid #303030;box-shadow:inset 0 0 0 1px #a8a8a8;background:#e2e2e2'></div>
<div class='a' style='left:276px;top:282px;width:16px;height:19px;background:#2a2a2c'></div>
<div class='a' style='left:292px;top:282px;width:14px;height:19px;background:#3a3a3e'></div>
<svg style='left:276px;top:282px' width='16' height='19'><path d='M3 7.5h1M7 7.5h1M11 7.5h1M5 9.5h1M9 9.5h1M13 9.5h1M3 11.5h1M7 11.5h1M11 11.5h1' stroke='#b0b0b0'/></svg>
<div class='a' style='left:306px;top:282px;width:782px;height:19px;background:#e4e4e6'></div>
<div class='a' style='left:276px;top:301px;width:812px;height:1px;background:#6e6e70'></div>
<div class='a' style='left:455px;top:282px;width:1px;height:19px;background:#7a7a7c'></div>
<div class='a' style='left:615px;top:282px;width:1px;height:19px;background:#7a7a7c'></div>
<div class='a' style='left:715px;top:282px;width:1px;height:19px;background:#7a7a7c'></div>
<div class='a' style='left:795px;top:282px;width:1px;height:19px;background:#7a7a7c'></div>
<div class='a' style='left:855px;top:282px;width:1px;height:19px;background:#7a7a7c'></div>
<div class='a' style='left:915px;top:282px;width:1px;height:19px;background:#7a7a7c'></div>
<div class='a' style='left:1015px;top:282px;width:1px;height:19px;background:#7a7a7c'></div>
<div class='a' style='left:818px;top:285px;width:13px;height:13px;border:1px solid #303030;box-shadow:inset 0 0 0 1px #a8a8a8;background:#e2e2e2'></div>
<div class='a' style='left:878px;top:285px;width:13px;height:13px;border:1px solid #303030;box-shadow:inset 0 0 0 1px #a8a8a8;background:#e2e2e2'></div>
<div class='a' style='left:716px;top:282px;width:79px;height:19px;background:#72b6f0'></div>
<div class='a' style='left:276px;top:302px;width:812px;height:9px;background:#4b4a4f'></div>
<div class='a' style='left:1088px;top:202px;width:15px;height:109px;background:#333336'></div>
<svg style='left:1091px;top:207px' width='10' height='6'><path d='M0.5 5.5 L5 1 L9.5 5.5' stroke='#555' fill='none' stroke-width='1.3'/></svg>
<div class='a' style='left:1088px;top:218px;width:15px;height:1px;background:#444'></div>
<div class='a' style='left:1091px;top:254px;width:9px;height:38px;background:#5a5a5c'></div>
<div class='a' style='left:1088px;top:294px;width:15px;height:1px;background:#444'></div>
<svg style='left:1091px;top:299px' width='10' height='6'><path d='M0.5 0.5 L5 5 L9.5 0.5' stroke='#555' fill='none' stroke-width='1.3'/></svg>
<div class='a' style='left:214px;top:312px;width:894px;height:3px;background:#2a2a2c'></div>
<div class='a' style='left:214px;top:315px;width:20px;height:428px;background:#000'></div>
<div class='a' style='left:215px;top:316px;width:18px;height:426px;background:linear-gradient(#58585c 0%,#3a3c40 25%,#1e2124 60%,#1e2124 100%)'></div>
<div class='a' style='left:233px;top:335px;width:100px;height:16px;white-space:nowrap;font-size:12px;line-height:16px;color:#f4f4f4;transform:rotate(90deg) scaleX(0.93);transform-origin:0 0'><span style='display:inline-block;width:25.0px'><span style='display:inline-block;font-size:13.0px;transform:scaleX(0.962);transform-origin:0 0;position:relative;top:-1px;-webkit-text-stroke:0.25px currentColor'>回路</span></span><span style='display:inline-block;width:38.0px'><span style='display:inline-block;font-size:15.0px;transform:scaleX(0.633);transform-origin:0 0;position:relative;top:-1px;-webkit-text-stroke:0.25px currentColor'>コメント</span></span><span style='display:inline-block;width:25.0px'><span style='display:inline-block;font-size:13.0px;transform:scaleX(0.962);transform-origin:0 0;position:relative;top:-1px;-webkit-text-stroke:0.25px currentColor'>一覧</span></span></div>
<svg style='left:220px;top:728px' width='9' height='11'><path d='M8.5 0 V10.5 L0 5.25 Z' fill='#9a9a9a'/></svg>
<div class='a' style='left:234px;top:315px;width:858px;height:411px;background:#fff'></div>
<div class='a' style='left:237px;top:315px;width:1px;height:411px;background:repeating-linear-gradient(#d8d8d8 0 2px,transparent 2px 4px)'></div>
<div class='a' style='left:287px;top:315px;width:2px;height:69px;background:#767676'></div>
<div class='a' style='left:972px;top:315px;width:2px;height:68px;background:#767676'></div>
<div class='a' style='left:237px;top:383px;width:746px;height:2px;background:#d4d4d4'></div>
<div class='a' style='left:287px;top:385px;width:2px;height:67px;background:#767676'></div>
<div class='a' style='left:931px;top:385px;width:2px;height:67px;background:#767676'></div>
<div class='a' style='left:237px;top:451px;width:705px;height:2px;background:#d4d4d4'></div>
<div class='a' style='left:287px;top:453px;width:2px;height:54px;background:#767676'></div>
<div class='a' style='left:526px;top:453px;width:2px;height:53px;background:#767676'></div>
<div class='a' style='left:237px;top:506px;width:833px;height:2px;background:#d4d4d4'></div>
<div class='a' style='left:287px;top:508px;width:2px;height:218px;background:#767676'></div>
<div class='a' style='left:1059px;top:508px;width:2px;height:218px;background:#767676'></div>
<svg style='left:288px;top:385px' width='660' height='70'>
<path d='M2 23.5 H24 M42 23.5 H88 M106 23.5 H603 M621 23.5 H643' stroke='#3c3c3c' stroke-width='1'/>
<path d='M23.5 15 V32 M41.5 15 V32' stroke='#3c3c3c' stroke-width='1.5'/>
<path d='M33 29 V20 M30.5 22 L33 18.5 L35.5 22' stroke='#222' stroke-width='1.6' fill='none'/>
<path d='M87.5 15 V32 M105.5 15 V32 M91 31 L102 18' stroke='#3c3c3c' stroke-width='1.5'/>
<circle cx='612' cy='23.5' r='9' fill='#fff' stroke='#222' stroke-width='1.2'/>
<path d='M2 56.5 H22 M40 56.5 H66.5 V23' stroke='#3c3c3c' stroke-width='1' fill='none'/>
<path d='M22.5 48 V66 M40.5 48 V66' stroke='#3c3c3c' stroke-width='1.5'/>
</svg>
<div class='a' style='left:381px;top:458px;width:49px;height:43px;background:#fff;border:1px solid #555'></div>
<svg style='left:288px;top:453px' width='260' height='60'>
<path d='M2 27.5 H23 M41 27.5 H93 M142 27.5 H238 M85 40.5 H93 M142 40.5 H152' stroke='#3c3c3c' stroke-width='1'/>
<path d='M22.5 19 V36 M40.5 19 V36' stroke='#3c3c3c' stroke-width='1.5'/>
<path d='M32 33 V24 M29.5 26 L32 22.5 L34.5 26' stroke='#222' stroke-width='1.6' fill='none'/>
</svg>
<svg style='left:288px;top:508px' width='780' height='40'>
<path d='M2 24.5 H22 M41 24.5 H82 M100 24.5 H130 M762 24.5 H772' stroke='#3c3c3c' stroke-width='1'/>
<path d='M22.5 15 V33 M40.5 15 V33 M81.5 15 V33 M99.5 15 V33 M84 32 L96 18' stroke='#3c3c3c' stroke-width='1.5'/>
</svg>
<div class='a' style='left:334px;top:315px;width:630px;height:65px;background:#fff;border:2px solid #000;border-top:none'></div>
<div class='a' style='left:336px;top:315px;width:626px;height:63px;border:1px solid #f0f0f0;border-top:none'></div>
<div class='a' style='left:337px;top:315px;width:20px;height:46px;background:#dcdcde'></div>
<div class='a' style='left:391px;top:315px;width:1px;height:46px;background:repeating-linear-gradient(#888 0 2px,transparent 2px 3px)'></div>
<div class='a' style='left:397px;top:315px;width:1px;height:20px;background:#999'></div>
<div class='a' style='left:397px;top:335px;width:5px;height:1px;background:#999'></div>
<div class='a' style='left:338px;top:361px;width:15px;height:15px;background:#141414'></div>
<svg style='left:342px;top:364px' width='6' height='9'><path d='M5 0.5 L1 4.5 L5 8.5' stroke='#2c2c2c' fill='none' stroke-width='1.3'/></svg>
<div class='a' style='left:354px;top:361px;width:573px;height:15px;background:#9c9c9c'></div>
<div class='a' style='left:927px;top:361px;width:16px;height:15px;background:#141414'></div>
<svg style='left:932px;top:364px' width='6' height='9'><path d='M1 0.5 L5 4.5 L1 8.5' stroke='#2c2c2c' fill='none' stroke-width='1.3'/></svg>
<div class='a' style='left:944px;top:315px;width:16px;height:29px;background:#9c9c9c'></div>
<div class='a' style='left:944px;top:344px;width:16px;height:15px;background:#2a2a2a'></div>
<svg style='left:947px;top:348px' width='10' height='6'><path d='M0.5 0.5 L5 5 L9.5 0.5' stroke='#555' fill='none' stroke-width='1.3'/></svg>
<div class='a' style='left:944px;top:361px;width:16px;height:15px;background:#f0f0f0'></div>
<div class='a' style='left:417px;top:517px;width:632px;height:207px;background:#fff;border:2px solid #000'></div>
<div class='a' style='left:419px;top:519px;width:628px;height:203px;border:1px solid #f0f0f0'></div>
<div class='a' style='left:420px;top:521px;width:20px;height:185px;background:#dcdcde'></div>
<div class='a' style='left:474px;top:521px;width:1px;height:185px;background:repeating-linear-gradient(#c4c4c4 0 2px,transparent 2px 3px)'></div>
<svg style='left:475px;top:521px' width='12' height='150'><rect x='1.5' y='3.5' width='8' height='8' fill='#fff' stroke='#999'/><path d='M3 7.5 H8' stroke='#666'/><path d='M5.5 11.5 V57.5' stroke='#aaa'/><rect x='1.5' y='57.5' width='8' height='8' fill='#fff' stroke='#999'/><path d='M3 61.5 H8' stroke='#666'/><path d='M5.5 65.5 V138.5 H10' stroke='#aaa' fill='none'/></svg>
<div class='a' style='left:1031px;top:520px;width:15px;height:7px;background:#fff;border:1px solid #555'></div>
<div class='a' style='left:1031px;top:527px;width:15px;height:16px;background:#2a2a2a'></div>
<svg style='left:1033px;top:532px' width='10' height='6'><path d='M0.5 5.5 L5 1 L9.5 5.5' stroke='#555' fill='none' stroke-width='1.3'/></svg>
<div class='a' style='left:1031px;top:543px;width:15px;height:146px;background:#9c9c9c'></div>
<div class='a' style='left:1034px;top:545px;width:9px;height:73px;background:#b4b4b4'></div>
<div class='a' style='left:1031px;top:689px;width:15px;height:15px;background:#2a2a2a'></div>
<svg style='left:1033px;top:694px' width='10' height='6'><path d='M0.5 0.5 L5 5 L9.5 0.5' stroke='#555' fill='none' stroke-width='1.3'/></svg>
<div class='a' style='left:421px;top:706px;width:15px;height:15px;background:#141414'></div>
<svg style='left:425px;top:709px' width='6' height='9'><path d='M5 0.5 L1 4.5 L5 8.5' stroke='#2c2c2c' fill='none' stroke-width='1.3'/></svg>
<div class='a' style='left:437px;top:706px;width:577px;height:15px;background:#9c9c9c'></div>
<div class='a' style='left:1014px;top:706px;width:15px;height:15px;background:#141414'></div>
<svg style='left:1019px;top:709px' width='6' height='9'><path d='M1 0.5 L5 4.5 L1 8.5' stroke='#2c2c2c' fill='none' stroke-width='1.3'/></svg>
<div class='a' style='left:1031px;top:705px;width:15px;height:16px;background:#f2f2f2'></div>
<div class='a' style='left:1050px;top:531px;width:10px;height:1px;background:#555'></div>
<div class='a' style='left:1092px;top:315px;width:15px;height:411px;background:#9c9c9c'></div>
<div class='a' style='left:1092px;top:315px;width:15px;height:8px;background:#d0d0d0;border:1px solid #fff;border-bottom:1px solid #555'></div>
<div class='a' style='left:1092px;top:324px;width:15px;height:14px;background:#2a2a2a'></div>
<svg style='left:1095px;top:328px' width='10' height='6'><path d='M0.5 5.5 L5 1 L9.5 5.5' stroke='#555' fill='none' stroke-width='1.3'/></svg>
<div class='a' style='left:1095px;top:439px;width:9px;height:178px;background:#acacac'></div>
<div class='a' style='left:1092px;top:709px;width:15px;height:16px;background:#2a2a2a'></div>
<svg style='left:1095px;top:714px' width='10' height='6'><path d='M0.5 0.5 L5 5 L9.5 0.5' stroke='#555' fill='none' stroke-width='1.3'/></svg>
<div class='a' style='left:234px;top:726px;width:858px;height:17px;background:#fff'></div>
<div class='a' style='left:238px;top:727px;width:15px;height:15px;background:#141414'></div>
<svg style='left:242px;top:730px' width='6' height='9'><path d='M5 0.5 L1 4.5 L5 8.5' stroke='#2c2c2c' fill='none' stroke-width='1.3'/></svg>
<div class='a' style='left:254px;top:727px;width:821px;height:15px;background:#9c9c9c'></div>
<div class='a' style='left:1075px;top:727px;width:16px;height:15px;background:#141414'></div>
<svg style='left:1080px;top:730px' width='6' height='9'><path d='M1 0.5 L5 4.5 L1 8.5' stroke='#2c2c2c' fill='none' stroke-width='1.3'/></svg>
<div class='a' style='left:1092px;top:726px;width:15px;height:17px;background:#333;border:1px dotted #888'></div>
<div class='a' style='left:1116px;top:105px;width:198px;height:638px;background:#4a4a4e'></div>
<div class='a' style='left:1116px;top:105px;width:198px;height:21px;background:linear-gradient(#565658 0%,#4c4c4e 30%,#3a3a3c 42%,#222426 55%,#222426 80%,#2a2c2e 100%)'></div>
<svg style='left:1190px;top:113px' width='88' height='6'><path d='M0 0.5h1M4 0.5h1M8 0.5h1M12 0.5h1M16 0.5h1M20 0.5h1M24 0.5h1M28 0.5h1M32 0.5h1M36 0.5h1M40 0.5h1M44 0.5h1M48 0.5h1M52 0.5h1M56 0.5h1M60 0.5h1M64 0.5h1M68 0.5h1M72 0.5h1M76 0.5h1M80 0.5h1M84 0.5h1M2 2.5h1M6 2.5h1M10 2.5h1M14 2.5h1M18 2.5h1M22 2.5h1M26 2.5h1M30 2.5h1M34 2.5h1M38 2.5h1M42 2.5h1M46 2.5h1M50 2.5h1M54 2.5h1M58 2.5h1M62 2.5h1M66 2.5h1M70 2.5h1M74 2.5h1M78 2.5h1M82 2.5h1M86 2.5h1M0 4.5h1M4 4.5h1M8 4.5h1M12 4.5h1M16 4.5h1M20 4.5h1M24 4.5h1M28 4.5h1M32 4.5h1M36 4.5h1M40 4.5h1M44 4.5h1M48 4.5h1M52 4.5h1M56 4.5h1M60 4.5h1M64 4.5h1M68 4.5h1M72 4.5h1M76 4.5h1M80 4.5h1M84 4.5h1' stroke='#8c8c8e' stroke-width='1'/></svg>
<svg style='left:1285px;top:115px' width='9' height='5'><path d='M0 0 H8 L4 4.5 Z' fill='#fff'/></svg>
<svg style='left:1300px;top:110px' width='8' height='11'><rect x='1' y='0' width='5' height='7' fill='#fff'/><path d='M3.5 1 V6' stroke='#333'/><path d='M0 7.5 H7 M3.5 7 V11' stroke='#fff'/></svg>
<div class='a' style='left:1116px;top:127px;width:198px;height:2px;background:#6a6a6c'></div>
<div class='a' style='left:1118px;top:131px;width:146px;height:20px;background:#fff;border:1px solid #1a1a1a'></div>
<div class='a' style='left:1244px;top:131px;width:20px;height:20px;background:linear-gradient(#5a5a62,#44444c);border:1px solid #1a1a1a'></div>
<svg style='left:1249px;top:138px' width='10' height='7'><path d='M0 0 H10 L5 7 Z' fill='#f0f0f0'/></svg>
<div class='a' style='left:1268px;top:131px;width:20px;height:20px;background:linear-gradient(#5a5a62,#44444c);border:1px solid #1a1a1a'></div>
<svg style='left:1271px;top:134px' width='14' height='14'><circle cx='8.5' cy='5.5' r='3.8' fill='none' stroke='#888' stroke-width='1.3'/><path d='M6 8 L2 12' stroke='#888' stroke-width='1.5'/></svg>
<div class='a' style='left:1292px;top:131px;width:20px;height:20px;background:linear-gradient(#5a5a62,#44444c);border:1px solid #1a1a1a'></div>
<svg style='left:1296px;top:135px' width='12' height='12'><path d='M1 1 L11 11 M11 1 L1 11' stroke='#888' stroke-width='1.6'/></svg>
<div class='a' style='left:1117px;top:154px;width:179px;height:486px;background:#5e5c60'></div>
<div class='a' style='left:1117px;top:154px;width:179px;height:26px;background:linear-gradient(#7a7c88 0%,#60626c 50%,#42444e 100%);border:1px solid #000;border-radius:5px'></div>
<svg style='left:1122px;top:162px' width='9' height='10'><path d='M0 0 V10 L8.5 5 Z' fill='#f4f4f4'/></svg>
<div class='a' style='left:1117px;top:182px;width:179px;height:26px;background:linear-gradient(#7a7c88 0%,#60626c 50%,#42444e 100%);border:1px solid #000;border-radius:5px'></div>
<svg style='left:1122px;top:190px' width='9' height='10'><path d='M0 0 V10 L8.5 5 Z' fill='#f4f4f4'/></svg>
<div class='a' style='left:1117px;top:210px;width:179px;height:26px;background:linear-gradient(#7a7c88 0%,#60626c 50%,#42444e 100%);border:1px solid #000;border-radius:5px'></div>
<svg style='left:1122px;top:218px' width='9' height='10'><path d='M0 0 V10 L8.5 5 Z' fill='#f4f4f4'/></svg>
<div class='a' style='left:1117px;top:238px;width:179px;height:26px;background:linear-gradient(#7a7c88 0%,#60626c 50%,#42444e 100%);border:1px solid #000;border-radius:5px'></div>
<svg style='left:1122px;top:246px' width='9' height='10'><path d='M0 0 V10 L8.5 5 Z' fill='#f4f4f4'/></svg>
<div class='a' style='left:1117px;top:266px;width:179px;height:26px;background:linear-gradient(#7a7c88 0%,#60626c 50%,#42444e 100%);border:1px solid #000;border-radius:5px'></div>
<svg style='left:1122px;top:274px' width='9' height='10'><path d='M0 0 V10 L8.5 5 Z' fill='#f4f4f4'/></svg>
<div class='a' style='left:1117px;top:294px;width:179px;height:26px;background:linear-gradient(#7a7c88 0%,#60626c 50%,#42444e 100%);border:1px solid #000;border-radius:5px'></div>
<svg style='left:1122px;top:302px' width='9' height='10'><path d='M0 0 V10 L8.5 5 Z' fill='#f4f4f4'/></svg>
<div class='a' style='left:1117px;top:322px;width:179px;height:26px;background:linear-gradient(#7a7c88 0%,#60626c 50%,#42444e 100%);border:1px solid #000;border-radius:5px'></div>
<svg style='left:1122px;top:330px' width='9' height='10'><path d='M0 0 V10 L8.5 5 Z' fill='#f4f4f4'/></svg>
<div class='a' style='left:1117px;top:350px;width:179px;height:26px;background:linear-gradient(#7a7c88 0%,#60626c 50%,#42444e 100%);border:1px solid #000;border-radius:5px'></div>
<svg style='left:1122px;top:358px' width='9' height='10'><path d='M0 0 V10 L8.5 5 Z' fill='#f4f4f4'/></svg>
<div class='a' style='left:1117px;top:378px;width:179px;height:26px;background:linear-gradient(#7a7c88 0%,#60626c 50%,#42444e 100%);border:1px solid #000;border-radius:5px'></div>
<svg style='left:1122px;top:386px' width='9' height='10'><path d='M0 0 V10 L8.5 5 Z' fill='#f4f4f4'/></svg>
<div class='a' style='left:1117px;top:406px;width:179px;height:26px;background:linear-gradient(#7a7c88 0%,#60626c 50%,#42444e 100%);border:1px solid #000;border-radius:5px'></div>
<svg style='left:1122px;top:414px' width='9' height='10'><path d='M0 0 V10 L8.5 5 Z' fill='#f4f4f4'/></svg>
<div class='a' style='left:1117px;top:434px;width:179px;height:26px;background:linear-gradient(#7a7c88 0%,#60626c 50%,#42444e 100%);border:1px solid #000;border-radius:5px'></div>
<svg style='left:1122px;top:442px' width='9' height='10'><path d='M0 0 V10 L8.5 5 Z' fill='#f4f4f4'/></svg>
<div class='a' style='left:1117px;top:462px;width:179px;height:26px;background:linear-gradient(#7a7c88 0%,#60626c 50%,#42444e 100%);border:1px solid #000;border-radius:5px'></div>
<svg style='left:1122px;top:470px' width='9' height='10'><path d='M0 0 V10 L8.5 5 Z' fill='#f4f4f4'/></svg>
<div class='a' style='left:1117px;top:490px;width:179px;height:26px;background:linear-gradient(#7a7c88 0%,#60626c 50%,#42444e 100%);border:1px solid #000;border-radius:5px'></div>
<svg style='left:1122px;top:498px' width='9' height='10'><path d='M0 0 V10 L8.5 5 Z' fill='#f4f4f4'/></svg>
<div class='a' style='left:1117px;top:518px;width:179px;height:26px;background:linear-gradient(#7a7c88 0%,#60626c 50%,#42444e 100%);border:1px solid #000;border-radius:5px'></div>
<svg style='left:1122px;top:526px' width='9' height='10'><path d='M0 0 V10 L8.5 5 Z' fill='#f4f4f4'/></svg>
<div class='a' style='left:1117px;top:546px;width:179px;height:26px;background:linear-gradient(#7a7c88 0%,#60626c 50%,#42444e 100%);border:1px solid #000;border-radius:5px'></div>
<svg style='left:1122px;top:554px' width='9' height='10'><path d='M0 0 V10 L8.5 5 Z' fill='#f4f4f4'/></svg>
<div class='a' style='left:1117px;top:574px;width:179px;height:26px;background:linear-gradient(#7a7c88 0%,#60626c 50%,#42444e 100%);border:1px solid #000;border-radius:5px'></div>
<svg style='left:1122px;top:582px' width='9' height='10'><path d='M0 0 V10 L8.5 5 Z' fill='#f4f4f4'/></svg>
<div class='a' style='left:1117px;top:602px;width:179px;height:26px;background:linear-gradient(#7a7c88 0%,#60626c 50%,#42444e 100%);border:1px solid #000;border-radius:5px'></div>
<svg style='left:1122px;top:610px' width='9' height='10'><path d='M0 0 V10 L8.5 5 Z' fill='#f4f4f4'/></svg>
<div class='a' style='left:1117px;top:630px;width:179px;height:26px;background:linear-gradient(#7a7c88 0%,#60626c 50%,#42444e 100%);border:1px solid #000;border-radius:5px'></div>
<svg style='left:1122px;top:638px' width='9' height='10'><path d='M0 0 V10 L8.5 5 Z' fill='#f4f4f4'/></svg>
<div class='a' style='left:1298px;top:154px;width:15px;height:484px;background:#3a3a3e'></div>
<div class='a' style='left:1298px;top:154px;width:15px;height:16px;background:#2a2a2e'></div>
<svg style='left:1301px;top:159px' width='10' height='6'><path d='M0.5 5.5 L5 1 L9.5 5.5' stroke='#555' fill='none' stroke-width='1.3'/></svg>
<div class='a' style='left:1302px;top:171px;width:8px;height:259px;background:#5a5a5e'></div>
<div class='a' style='left:1298px;top:623px;width:15px;height:15px;background:#2a2a2e'></div>
<svg style='left:1301px;top:628px' width='10' height='6'><path d='M0.5 0.5 L5 5 L9.5 0.5' stroke='#555' fill='none' stroke-width='1.3'/></svg>
<span class='t' style='left:30.0px;top:8px;font-size:12px;line-height:16px;color:#000;transform:scaleX(0.9411);transform-origin:0 0;'>naviFFT - PLC1 - Sysmac Studio (64bit)</span>
<span class='t' style='left:11.0px;top:37px;font-size:12px;line-height:16px;color:#1a1a1a;transform:scaleX(0.9066);transform-origin:0 0;'><span style='display:inline-block;width:36.5px'><span style='display:inline-block;font-size:15.0px;transform:scaleX(0.608);transform-origin:0 0;position:relative;top:-1px;-webkit-text-stroke:0.25px currentColor'>ファイル</span></span>(<u>F</u>)</span>
<span class='t' style='left:74.0px;top:37px;font-size:12px;line-height:16px;color:#1a1a1a;transform:scaleX(0.9021);transform-origin:0 0;'><span style='display:inline-block;width:25.0px'><span style='display:inline-block;font-size:13.0px;transform:scaleX(0.962);transform-origin:0 0;position:relative;top:-1px;-webkit-text-stroke:0.25px currentColor'>編集</span></span>(<u>E</u>)</span>
<span class='t' style='left:128.0px;top:37px;font-size:12px;line-height:16px;color:#1a1a1a;transform:scaleX(0.9265);transform-origin:0 0;'><span style='display:inline-block;width:25.0px'><span style='display:inline-block;font-size:13.0px;transform:scaleX(0.962);transform-origin:0 0;position:relative;top:-1px;-webkit-text-stroke:0.25px currentColor'>表示</span></span>(<u>V</u>)</span>
<span class='t' style='left:183.0px;top:37px;font-size:12px;line-height:16px;color:#1a1a1a;transform:scaleX(0.9080);transform-origin:0 0;'><span style='display:inline-block;width:25.0px'><span style='display:inline-block;font-size:13.0px;transform:scaleX(0.962);transform-origin:0 0;position:relative;top:-1px;-webkit-text-stroke:0.25px currentColor'>挿入</span></span>(<u>I</u>)</span>
<span class='t' style='left:232.0px;top:37px;font-size:12px;line-height:16px;color:#1a1a1a;transform:scaleX(0.9229);transform-origin:0 0;'><span style='display:inline-block;width:55.5px'><span style='display:inline-block;font-size:15.0px;transform:scaleX(0.617);transform-origin:0 0;position:relative;top:-1px;-webkit-text-stroke:0.25px currentColor'>プロジェクト</span></span>(<u>P</u>)</span>
<span class='t' style='left:314.0px;top:37px;font-size:12px;line-height:16px;color:#1a1a1a;transform:scaleX(0.8763);transform-origin:0 0;'><span style='display:inline-block;width:57.5px'><span style='display:inline-block;font-size:15.0px;transform:scaleX(0.639);transform-origin:0 0;position:relative;top:-1px;-webkit-text-stroke:0.25px currentColor'>コントローラ</span></span>(<u>C</u>)</span>
<span class='t' style='left:395.0px;top:37px;font-size:12px;line-height:16px;color:#1a1a1a;transform:scaleX(0.9049);transform-origin:0 0;'><span style='display:inline-block;width:73.5px'><span style='display:inline-block;font-size:15.0px;transform:scaleX(0.613);transform-origin:0 0;position:relative;top:-1px;-webkit-text-stroke:0.25px currentColor'>シミュレーション</span></span>(<u>S</u>)</span>
<span class='t' style='left:492.0px;top:37px;font-size:12px;line-height:16px;color:#1a1a1a;transform:scaleX(0.9020);transform-origin:0 0;'><span style='display:inline-block;width:29.0px'><span style='display:inline-block;font-size:15.0px;transform:scaleX(0.644);transform-origin:0 0;position:relative;top:-1px;-webkit-text-stroke:0.25px currentColor'>ツール</span></span>(<u>T</u>)</span>
<span class='t' style='left:548.0px;top:37px;font-size:12px;line-height:16px;color:#1a1a1a;transform:scaleX(0.9184);transform-origin:0 0;'><span style='display:inline-block;width:46.0px'><span style='display:inline-block;font-size:15.0px;transform:scaleX(0.613);transform-origin:0 0;position:relative;top:-1px;-webkit-text-stroke:0.25px currentColor'>ウィンドウ</span></span>(<u>W</u>)</span>
<span class='t' style='left:626.0px;top:37px;font-size:12px;line-height:16px;color:#1a1a1a;transform:scaleX(0.9741);transform-origin:0 0;'><span style='display:inline-block;width:28.5px'><span style='display:inline-block;font-size:15.0px;transform:scaleX(0.633);transform-origin:0 0;position:relative;top:-1px;-webkit-text-stroke:0.25px currentColor'>ヘルプ</span></span>(<u>H</u>)</span>
<span class='t' style='left:12.0px;top:109px;font-size:12px;line-height:16px;color:#ffffff;transform:scaleX(0.9106);transform-origin:0 0;'><span style='display:inline-block;width:123.0px'><span style='display:inline-block;font-size:15.0px;transform:scaleX(0.631);transform-origin:0 0;position:relative;top:-1px;-webkit-text-stroke:0.25px currentColor'>マルチビューエクスプローラ</span></span></span>
<span class='t' style='left:16.0px;top:138px;font-size:12px;line-height:16px;color:#f8f8f8;transform:scaleX(0.8658);transform-origin:0 0;'>PLC1</span>
<span class='t' style='left:35.0px;top:166px;font-size:13px;line-height:16px;color:#141414;transform:scaleX(1.0357);transform-origin:0 0;'><span style='display:inline-block;width:25.0px'><span style='display:inline-block;font-size:13.0px;transform:scaleX(0.962);transform-origin:0 0;position:relative;top:-1px;-webkit-text-stroke:0.25px currentColor'>構成</span></span><span style='display:inline-block;width:6.0px'><span style='display:inline-block;font-size:15.0px;transform:scaleX(0.400);transform-origin:0 0;position:relative;top:-1px;-webkit-text-stroke:0.25px currentColor'>・</span></span><span style='display:inline-block;width:25.0px'><span style='display:inline-block;font-size:13.0px;transform:scaleX(0.962);transform-origin:0 0;position:relative;top:-1px;-webkit-text-stroke:0.25px currentColor'>設定</span></span></span>
<span class='t' style='left:35.0px;top:426px;font-size:13px;line-height:16px;color:#141414;transform:scaleX(0.9925);transform-origin:0 0;'><span style='display:inline-block;width:66.5px'><span style='display:inline-block;font-size:15.0px;transform:scaleX(0.633);transform-origin:0 0;position:relative;top:-1px;-webkit-text-stroke:0.25px currentColor'>プログラミング</span></span></span>
<span class='t' style='left:78.0px;top:186px;font-size:12px;line-height:16px;color:#f2f2f2;transform:scaleX(0.9074);transform-origin:0 0;'>EtherCAT</span>
<span class='t' style='left:78.0px;top:206px;font-size:12px;line-height:16px;color:#f2f2f2;transform:scaleX(0.9719);transform-origin:0 0;'>CPU<span style='display:inline-block;width:6.0px'><span style='display:inline-block;font-size:15.0px;transform:scaleX(0.400);transform-origin:0 0;position:relative;top:-1px;-webkit-text-stroke:0.25px currentColor'>・</span></span><span style='display:inline-block;width:25.0px'><span style='display:inline-block;font-size:13.0px;transform:scaleX(0.962);transform-origin:0 0;position:relative;top:-1px;-webkit-text-stroke:0.25px currentColor'>増設</span></span><span style='display:inline-block;width:27.0px'><span style='display:inline-block;font-size:15.0px;transform:scaleX(0.600);transform-origin:0 0;position:relative;top:-1px;-webkit-text-stroke:0.25px currentColor'>ラック</span></span></span>
<span class='t' style='left:97.0px;top:226px;font-size:12px;line-height:16px;color:#f2f2f2;transform:scaleX(0.9361);transform-origin:0 0;'>CPU<span style='display:inline-block;width:27.0px'><span style='display:inline-block;font-size:15.0px;transform:scaleX(0.600);transform-origin:0 0;position:relative;top:-1px;-webkit-text-stroke:0.25px currentColor'>ラック</span></span></span>
<span class='t' style='left:116.0px;top:246px;font-size:12px;line-height:16px;color:#f2f2f2;transform:scaleX(1.0495);transform-origin:0 0;'><span style='display:inline-block;width:36.5px'><span style='display:inline-block;font-size:15.0px;transform:scaleX(0.608);transform-origin:0 0;position:relative;top:-1px;-webkit-text-stroke:0.25px currentColor'>ユニット</span></span>1 : NX-HA</span>
<span class='t' style='left:78.0px;top:266px;font-size:12px;line-height:16px;color:#f2f2f2;transform:scaleX(1.0461);transform-origin:0 0;'>I/O<span style='display:inline-block;width:27.0px'><span style='display:inline-block;font-size:15.0px;transform:scaleX(0.600);transform-origin:0 0;position:relative;top:-1px;-webkit-text-stroke:0.25px currentColor'>マップ</span></span></span>
<span class='t' style='left:78.0px;top:286px;font-size:12px;line-height:16px;color:#f2f2f2;transform:scaleX(0.9939);transform-origin:0 0;'><span style='display:inline-block;width:57.5px'><span style='display:inline-block;font-size:15.0px;transform:scaleX(0.639);transform-origin:0 0;position:relative;top:-1px;-webkit-text-stroke:0.25px currentColor'>コントローラ</span></span><span style='display:inline-block;width:25.0px'><span style='display:inline-block;font-size:13.0px;transform:scaleX(0.962);transform-origin:0 0;position:relative;top:-1px;-webkit-text-stroke:0.25px currentColor'>設定</span></span></span>
<span class='t' style='left:78.0px;top:306px;font-size:12px;line-height:16px;color:#f2f2f2;transform:scaleX(1.0259);transform-origin:0 0;'><span style='display:inline-block;width:46.5px'><span style='display:inline-block;font-size:15.0px;transform:scaleX(0.620);transform-origin:0 0;position:relative;top:-1px;-webkit-text-stroke:0.25px currentColor'>モーション</span></span><span style='display:inline-block;width:50.0px'><span style='display:inline-block;font-size:13.0px;transform:scaleX(0.962);transform-origin:0 0;position:relative;top:-1px;-webkit-text-stroke:0.25px currentColor'>制御設定</span></span></span>
<span class='t' style='left:78.0px;top:326px;font-size:12px;line-height:16px;color:#f2f2f2;transform:scaleX(1.0411);transform-origin:0 0;'><span style='display:inline-block;width:48.0px'><span style='display:inline-block;font-size:15.0px;transform:scaleX(0.640);transform-origin:0 0;position:relative;top:-1px;-webkit-text-stroke:0.25px currentColor'>カムデータ</span></span><span style='display:inline-block;width:25.0px'><span style='display:inline-block;font-size:13.0px;transform:scaleX(0.962);transform-origin:0 0;position:relative;top:-1px;-webkit-text-stroke:0.25px currentColor'>設定</span></span></span>
<span class='t' style='left:78.0px;top:346px;font-size:12px;line-height:16px;color:#f2f2f2;transform:scaleX(1.0317);transform-origin:0 0;'><span style='display:inline-block;width:38.0px'><span style='display:inline-block;font-size:15.0px;transform:scaleX(0.633);transform-origin:0 0;position:relative;top:-1px;-webkit-text-stroke:0.25px currentColor'>イベント</span></span><span style='display:inline-block;width:25.0px'><span style='display:inline-block;font-size:13.0px;transform:scaleX(0.962);transform-origin:0 0;position:relative;top:-1px;-webkit-text-stroke:0.25px currentColor'>設定</span></span></span>
<span class='t' style='left:78.0px;top:366px;font-size:12px;line-height:16px;color:#f2f2f2;transform:scaleX(1.0093);transform-origin:0 0;'><span style='display:inline-block;width:28.5px'><span style='display:inline-block;font-size:15.0px;transform:scaleX(0.633);transform-origin:0 0;position:relative;top:-1px;-webkit-text-stroke:0.25px currentColor'>タスク</span></span><span style='display:inline-block;width:25.0px'><span style='display:inline-block;font-size:13.0px;transform:scaleX(0.962);transform-origin:0 0;position:relative;top:-1px;-webkit-text-stroke:0.25px currentColor'>設定</span></span></span>
<span class='t' style='left:78.0px;top:386px;font-size:12px;line-height:16px;color:#f2f2f2;transform:scaleX(1.0270);transform-origin:0 0;'><span style='display:inline-block;width:67.5px'><span style='display:inline-block;font-size:15.0px;transform:scaleX(0.643);transform-origin:0 0;position:relative;top:-1px;-webkit-text-stroke:0.25px currentColor'>データトレース</span></span><span style='display:inline-block;width:25.0px'><span style='display:inline-block;font-size:13.0px;transform:scaleX(0.962);transform-origin:0 0;position:relative;top:-1px;-webkit-text-stroke:0.25px currentColor'>設定</span></span></span>
<span class='t' style='left:78.0px;top:406px;font-size:12px;line-height:16px;color:#f2f2f2;transform:scaleX(0.9575);transform-origin:0 0;'>OPC UA<span style='display:inline-block;width:25.0px'><span style='display:inline-block;font-size:13.0px;transform:scaleX(0.962);transform-origin:0 0;position:relative;top:-1px;-webkit-text-stroke:0.25px currentColor'>設定</span></span></span>
<span class='t' style='left:78.0px;top:446px;font-size:12px;line-height:16px;color:#f2f2f2;transform:scaleX(0.9225);transform-origin:0 0;'>POU</span>
<span class='t' style='left:97.0px;top:466px;font-size:12px;line-height:16px;color:#f2f2f2;transform:scaleX(1.0316);transform-origin:0 0;'><span style='display:inline-block;width:47.5px'><span style='display:inline-block;font-size:15.0px;transform:scaleX(0.633);transform-origin:0 0;position:relative;top:-1px;-webkit-text-stroke:0.25px currentColor'>プログラム</span></span></span>
<span class='t' style='left:116.0px;top:486px;font-size:12px;line-height:16px;color:#f2f2f2;transform:scaleX(0.9870);transform-origin:0 0;'>Program0</span>
<span class='t' style='left:97.0px;top:526px;font-size:12px;line-height:16px;color:#f2f2f2;transform:scaleX(0.9921);transform-origin:0 0;'><span style='display:inline-block;width:63.5px'><span style='display:inline-block;font-size:15.0px;transform:scaleX(0.605);transform-origin:0 0;position:relative;top:-1px;-webkit-text-stroke:0.25px currentColor'>ファンクション</span></span></span>
<span class='t' style='left:116.0px;top:546px;font-size:12px;line-height:16px;color:#f2f2f2;transform:scaleX(0.8750);transform-origin:0 0;'>HPF</span>
<span class='t' style='left:97.0px;top:566px;font-size:12px;line-height:16px;color:#f2f2f2;transform:scaleX(1.0000);transform-origin:0 0;'><span style='display:inline-block;width:100.0px'><span style='display:inline-block;font-size:15.0px;transform:scaleX(0.606);transform-origin:0 0;position:relative;top:-1px;-webkit-text-stroke:0.25px currentColor'>ファンクションブロック</span></span></span>
<span class='t' style='left:78.0px;top:586px;font-size:12px;line-height:16px;color:#f2f2f2;transform:scaleX(1.0690);transform-origin:0 0;'><span style='display:inline-block;width:29.0px'><span style='display:inline-block;font-size:15.0px;transform:scaleX(0.644);transform-origin:0 0;position:relative;top:-1px;-webkit-text-stroke:0.25px currentColor'>データ</span></span></span>
<span class='t' style='left:78.0px;top:606px;font-size:12px;line-height:16px;color:#f2f2f2;transform:scaleX(0.9825);transform-origin:0 0;'><span style='display:inline-block;width:28.5px'><span style='display:inline-block;font-size:15.0px;transform:scaleX(0.633);transform-origin:0 0;position:relative;top:-1px;-webkit-text-stroke:0.25px currentColor'>タスク</span></span></span>
<span class='t' style='left:135.0px;top:506px;font-size:12px;line-height:16px;color:#101828;transform:scaleX(0.9635);transform-origin:0 0;'>Section0</span>
<span class='t' style='left:16.0px;top:724px;font-size:12px;line-height:16px;color:#222;font-weight:700;font-family:"Liberation Serif",serif;'>i</span>
<span class='t' style='left:31.0px;top:725px;font-size:12px;line-height:16px;color:#f0f0f0;transform:scaleX(0.9247);transform-origin:0 0;'><span style='display:inline-block;width:46.5px'><span style='display:inline-block;font-size:15.0px;transform:scaleX(0.620);transform-origin:0 0;position:relative;top:-1px;-webkit-text-stroke:0.25px currentColor'>フィルター</span></span></span>
<span class='t' style='left:237.0px;top:109px;font-size:12px;line-height:16px;color:#a8a8a8;transform:scaleX(0.9239);transform-origin:0 0;'>CPU<span style='display:inline-block;width:6.0px'><span style='display:inline-block;font-size:15.0px;transform:scaleX(0.400);transform-origin:0 0;position:relative;top:-1px;-webkit-text-stroke:0.25px currentColor'>・</span></span><span style='display:inline-block;width:25.0px'><span style='display:inline-block;font-size:13.0px;transform:scaleX(0.962);transform-origin:0 0;position:relative;top:-1px;-webkit-text-stroke:0.25px currentColor'>増設</span></span><span style='display:inline-block;width:27.0px'><span style='display:inline-block;font-size:15.0px;transform:scaleX(0.600);transform-origin:0 0;position:relative;top:-1px;-webkit-text-stroke:0.25px currentColor'>ラック</span></span></span>
<span class='t' style='left:358.0px;top:109px;font-size:12px;line-height:16px;color:#a8a8a8;transform:scaleX(0.9495);transform-origin:0 0;'><span style='display:inline-block;width:36.5px'><span style='display:inline-block;font-size:15.0px;transform:scaleX(0.608);transform-origin:0 0;position:relative;top:-1px;-webkit-text-stroke:0.25px currentColor'>ユニット</span></span>1[NXBusMaster]:N......</span>
<span class='t' style='left:550.0px;top:109px;font-size:12px;line-height:16px;color:#a8a8a8;transform:scaleX(0.9764);transform-origin:0 0;'>I/O<span style='display:inline-block;width:27.0px'><span style='display:inline-block;font-size:15.0px;transform:scaleX(0.600);transform-origin:0 0;position:relative;top:-1px;-webkit-text-stroke:0.25px currentColor'>マップ</span></span></span>
<span class='t' style='left:637.0px;top:109px;font-size:12px;line-height:16px;color:#101010;transform:scaleX(0.9903);transform-origin:0 0;'>Section0 - Program0</span>
<span class='t' style='left:239.0px;top:133px;font-size:12px;line-height:16px;color:#ffffff;transform:scaleX(0.9134);transform-origin:0 0;'><span style='display:inline-block;width:25.0px'><span style='display:inline-block;font-size:13.0px;transform:scaleX(0.962);transform-origin:0 0;position:relative;top:-1px;-webkit-text-stroke:0.25px currentColor'>変数</span></span><span style='display:inline-block;width:38.5px'><span style='display:inline-block;font-size:15.0px;transform:scaleX(0.642);transform-origin:0 0;position:relative;top:-1px;-webkit-text-stroke:0.25px currentColor'>テーブル</span></span></span>
<span class='t' style='left:239.0px;top:155px;font-size:12px;line-height:16px;color:#ffffff;transform:scaleX(0.9578);transform-origin:0 0;'><span style='display:inline-block;width:50.0px'><span style='display:inline-block;font-size:13.0px;transform:scaleX(0.962);transform-origin:0 0;position:relative;top:-1px;-webkit-text-stroke:0.25px currentColor'>名前空間</span></span> - <span style='display:inline-block;width:50.0px'><span style='display:inline-block;font-size:13.0px;transform:scaleX(0.962);transform-origin:0 0;position:relative;top:-1px;-webkit-text-stroke:0.25px currentColor'>使用宣言</span></span></span>
<span class='t' style='left:220.0px;top:179px;font-size:12px;line-height:16px;color:#141414;transform:scaleX(1.1034);transform-origin:0 0;'><span style='display:inline-block;width:43.5px'><span style='display:inline-block;font-size:11.3px;transform:scaleX(0.962);transform-origin:0 0;position:relative;top:-1px;-webkit-text-stroke:0.25px currentColor'>内部変数</span></span></span>
<span class='t' style='left:220.0px;top:195px;font-size:12px;line-height:16px;color:#f0f0f0;transform:scaleX(1.1034);transform-origin:0 0;'><span style='display:inline-block;width:43.5px'><span style='display:inline-block;font-size:11.3px;transform:scaleX(0.962);transform-origin:0 0;position:relative;top:-1px;-webkit-text-stroke:0.25px currentColor'>外部変数</span></span></span>
<span class='t' style='left:368.5px;top:183px;font-size:12px;line-height:16px;color:#f4f4f4;transform:scaleX(1.0552);transform-origin:0 0;'><span style='display:inline-block;width:21.8px'><span style='display:inline-block;font-size:11.3px;transform:scaleX(0.962);transform-origin:0 0;position:relative;top:-1px;-webkit-text-stroke:0.25px currentColor'>名称</span></span></span>
<span class='t' style='left:516.0px;top:183px;font-size:12px;line-height:16px;color:#f4f4f4;transform:scaleX(1.0533);transform-origin:0 0;'><span style='display:inline-block;width:25.2px'><span style='display:inline-block;font-size:13.1px;transform:scaleX(0.644);transform-origin:0 0;position:relative;top:-1px;-webkit-text-stroke:0.25px currentColor'>データ</span></span><span style='display:inline-block;width:10.9px'><span style='display:inline-block;font-size:11.3px;transform:scaleX(0.962);transform-origin:0 0;position:relative;top:-1px;-webkit-text-stroke:0.25px currentColor'>型</span></span></span>
<span class='t' style='left:647.0px;top:183px;font-size:12px;line-height:16px;color:#f4f4f4;transform:scaleX(1.1045);transform-origin:0 0;'><span style='display:inline-block;width:32.6px'><span style='display:inline-block;font-size:11.3px;transform:scaleX(0.962);transform-origin:0 0;position:relative;top:-1px;-webkit-text-stroke:0.25px currentColor'>初期値</span></span></span>
<span class='t' style='left:737.5px;top:183px;font-size:12px;line-height:16px;color:#f4f4f4;transform:scaleX(1.0738);transform-origin:0 0;'><span style='display:inline-block;width:32.6px'><span style='display:inline-block;font-size:11.3px;transform:scaleX(0.962);transform-origin:0 0;position:relative;top:-1px;-webkit-text-stroke:0.25px currentColor'>割付先</span></span></span>
<span class='t' style='left:813.5px;top:183px;font-size:12px;line-height:16px;color:#f4f4f4;transform:scaleX(1.0552);transform-origin:0 0;'><span style='display:inline-block;width:21.8px'><span style='display:inline-block;font-size:11.3px;transform:scaleX(0.962);transform-origin:0 0;position:relative;top:-1px;-webkit-text-stroke:0.25px currentColor'>保持</span></span></span>
<span class='t' style='left:858.5px;top:183px;font-size:12px;line-height:16px;color:#f4f4f4;transform:scaleX(1.0687);transform-origin:0 0;'><span style='display:inline-block;width:49.6px'><span style='display:inline-block;font-size:13.1px;transform:scaleX(0.633);transform-origin:0 0;position:relative;top:-1px;-webkit-text-stroke:0.25px currentColor'>コンスタント</span></span></span>
<span class='t' style='left:948.0px;top:183px;font-size:12px;line-height:16px;color:#f4f4f4;transform:scaleX(1.0274);transform-origin:0 0;'><span style='display:inline-block;width:33.1px'><span style='display:inline-block;font-size:13.1px;transform:scaleX(0.633);transform-origin:0 0;position:relative;top:-1px;-webkit-text-stroke:0.25px currentColor'>コメント</span></span></span>
<span class='t' style='left:308.0px;top:203px;font-size:12px;line-height:16px;color:#141414;transform:scaleX(0.8660);transform-origin:0 0;'>FFTStart</span>
<span class='t' style='left:458.0px;top:203px;font-size:12px;line-height:16px;color:#141414;transform:scaleX(0.8993);transform-origin:0 0;'>BOOL</span>
<span class='t' style='left:308.0px;top:223px;font-size:12px;line-height:16px;color:#141414;transform:scaleX(0.8633);transform-origin:0 0;'>FFTRun</span>
<span class='t' style='left:458.0px;top:223px;font-size:12px;line-height:16px;color:#141414;transform:scaleX(0.8993);transform-origin:0 0;'>BOOL</span>
<span class='t' style='left:308.0px;top:243px;font-size:12px;line-height:16px;color:#141414;transform:scaleX(0.8536);transform-origin:0 0;'>FFTEnd</span>
<span class='t' style='left:458.0px;top:243px;font-size:12px;line-height:16px;color:#141414;transform:scaleX(0.8993);transform-origin:0 0;'>BOOL</span>
<span class='t' style='left:308.0px;top:263px;font-size:12px;line-height:16px;color:#141414;transform:scaleX(0.9240);transform-origin:0 0;'>FFTDataCnt</span>
<span class='t' style='left:458.0px;top:263px;font-size:12px;line-height:16px;color:#141414;transform:scaleX(0.9286);transform-origin:0 0;'>UINT</span>
<span class='t' style='left:308.0px;top:283px;font-size:12px;line-height:16px;color:#141414;transform:scaleX(0.9143);transform-origin:0 0;'>FFTDataSetFlg</span>
<span class='t' style='left:458.0px;top:283px;font-size:12px;line-height:16px;color:#141414;transform:scaleX(0.8993);transform-origin:0 0;'>BOOL</span>
<span class='t' style='left:252.0px;top:386px;font-size:11px;line-height:16px;color:#222;'>2</span>
<span class='t' style='left:302.0px;top:383px;font-size:11px;line-height:16px;color:#222;transform:scaleX(0.8758);transform-origin:0 0;'>FFTStart</span>
<span class='t' style='left:367.0px;top:383px;font-size:11px;line-height:16px;color:#222;transform:scaleX(0.8557);transform-origin:0 0;'>FFTEnd</span>
<span class='t' style='left:882.5px;top:383px;font-size:11px;line-height:16px;color:#222;transform:scaleX(0.8675);transform-origin:0 0;'>FFTRun</span>
<span class='t' style='left:302.0px;top:416px;font-size:11px;line-height:16px;color:#222;transform:scaleX(0.8675);transform-origin:0 0;'>FFTRun</span>
<span class='t' style='left:252.0px;top:451px;font-size:11px;line-height:16px;color:#222;'>3</span>
<span class='t' style='left:302.0px;top:456px;font-size:11px;line-height:16px;color:#222;transform:scaleX(0.8675);transform-origin:0 0;'>FFTRun</span>
<span class='t' style='left:389.5px;top:457px;font-size:11px;line-height:16px;color:#222;transform:scaleX(0.9566);transform-origin:0 0;'>MOVE</span>
<span class='t' style='left:385.0px;top:472px;font-size:11px;line-height:16px;color:#222;transform:scaleX(0.9816);transform-origin:0 0;'>EN</span>
<span class='t' style='left:407.0px;top:472px;font-size:11px;line-height:16px;color:#222;transform:scaleX(0.8807);transform-origin:0 0;'>ENO</span>
<span class='t' style='left:385.0px;top:485px;font-size:11px;line-height:16px;color:#222;transform:scaleX(1.0884);transform-origin:0 0;'>In</span>
<span class='t' style='left:410.0px;top:485px;font-size:11px;line-height:16px;color:#222;transform:scaleX(1.0150);transform-origin:0 0;'>Out</span>
<span class='t' style='left:366.0px;top:485px;font-size:11px;line-height:16px;color:#222;'>0</span>
<span class='t' style='left:441.0px;top:485px;font-size:11px;line-height:16px;color:#222;transform:scaleX(0.9254);transform-origin:0 0;'>FFTDataCnt</span>
<span class='t' style='left:252.0px;top:508px;font-size:11px;line-height:16px;color:#222;'>4</span>
<span class='t' style='left:302.0px;top:507px;font-size:11px;line-height:16px;color:#222;transform:scaleX(0.8675);transform-origin:0 0;'>FFTRun</span>
<span class='t' style='left:344.0px;top:507px;font-size:11px;line-height:16px;color:#222;transform:scaleX(0.9044);transform-origin:0 0;'>FFTDataSetFlg</span>
<span class='t' style='left:382.3px;top:319px;font-size:12px;line-height:16px;color:#000000;'>4</span>
<span class='t' style='left:382.3px;top:337px;font-size:12px;line-height:16px;color:#000000;'>5</span>
<span class='t' style='left:404.0px;top:317px;font-size:13px;line-height:16px;color:#0000ff;transform:scaleX(0.9432);transform-origin:0 0;'>END_FOR;</span>
<span class='t' style='left:464.3px;top:522px;font-size:12px;line-height:16px;color:#000000;'>1</span>
<span class='t' style='left:464.3px;top:540px;font-size:12px;line-height:16px;color:#000000;'>2</span>
<span class='t' style='left:464.3px;top:558px;font-size:12px;line-height:16px;color:#000000;'>3</span>
<span class='t' style='left:464.3px;top:576px;font-size:12px;line-height:16px;color:#000000;'>4</span>
<span class='t' style='left:464.3px;top:594px;font-size:12px;line-height:16px;color:#000000;'>5</span>
<span class='t' style='left:464.3px;top:612px;font-size:12px;line-height:16px;color:#000000;'>6</span>
<span class='t' style='left:464.3px;top:630px;font-size:12px;line-height:16px;color:#000000;'>7</span>
<span class='t' style='left:464.3px;top:648px;font-size:12px;line-height:16px;color:#000000;'>8</span>
<span class='t' style='left:464.3px;top:666px;font-size:12px;line-height:16px;color:#000000;'>9</span>
<span class='t' style='left:486.0px;top:520px;font-size:13px;line-height:16px;color:#000000;transform:scaleX(1.0116);transform-origin:0 0;'><span style='color:#0000ff'>FOR</span> cnt := 0 <span style='color:#0000ff'>TO</span> 19 <span style='color:#0000ff'>BY</span> 1 <span style='color:#0000ff'>DO</span></span>
<span class='t' style='left:502.0px;top:538px;font-size:13px;line-height:16px;color:#000000;transform:scaleX(1.0050);transform-origin:0 0;'><span style='color:#b40a5a'>FFTData[FFTDataCnt]</span> := <span style='color:#0000ff'>REAL_TO_LREAL</span>(AnalogFilterInput[cnt]);</span>
<span class='t' style='left:502.0px;top:556px;font-size:13px;line-height:16px;color:#000000;transform:scaleX(1.0100);transform-origin:0 0;'>FFTDataCnt := FFTDataCnt + 1;</span>
<span class='t' style='left:502.0px;top:574px;font-size:13px;line-height:16px;color:#000000;transform:scaleX(1.0181);transform-origin:0 0;'><span style='color:#0000ff'>IF</span> FFTDataCnt &gt;= 4096 <span style='color:#0000ff'>THEN</span></span>
<span class='t' style='left:516.0px;top:592px;font-size:13px;line-height:16px;color:#000000;transform:scaleX(0.9790);transform-origin:0 0;'>FFTDataSetFlg := <span style='color:#0000ff'>TRUE</span>;</span>
<span class='t' style='left:516.0px;top:610px;font-size:13px;line-height:16px;color:#000000;transform:scaleX(0.9327);transform-origin:0 0;'><span style='color:#0000ff'>EXIT</span>;</span>
<span class='t' style='left:502.0px;top:628px;font-size:13px;line-height:16px;color:#000000;transform:scaleX(0.9226);transform-origin:0 0;'><span style='color:#0000ff'>END_IF</span>;</span>
<span class='t' style='left:486.0px;top:646px;font-size:13px;line-height:16px;color:#000000;transform:scaleX(0.9278);transform-origin:0 0;'><span style='color:#0000ff'>END_FOR</span>;</span>
<span class='t' style='left:1120.0px;top:109px;font-size:12px;line-height:16px;color:#ffffff;transform:scaleX(0.9466);transform-origin:0 0;'><span style='display:inline-block;width:65.5px'><span style='display:inline-block;font-size:15.0px;transform:scaleX(0.624);transform-origin:0 0;position:relative;top:-1px;-webkit-text-stroke:0.25px currentColor'>ツールボックス</span></span></span>
<span class='t' style='left:1122.0px;top:133px;font-size:12px;line-height:16px;color:#111;transform:scaleX(0.9736);transform-origin:0 0;'>&lt;<span style='display:inline-block;width:25.0px'><span style='display:inline-block;font-size:13.0px;transform:scaleX(0.962);transform-origin:0 0;position:relative;top:-1px;-webkit-text-stroke:0.25px currentColor'>検索</span></span>&gt;</span>
<span class='t' style='left:1140.0px;top:160px;font-size:12px;line-height:16px;color:#f4f4f4;transform:scaleX(0.9137);transform-origin:0 0;'>BCD<span style='display:inline-block;width:25.0px'><span style='display:inline-block;font-size:13.0px;transform:scaleX(0.962);transform-origin:0 0;position:relative;top:-1px;-webkit-text-stroke:0.25px currentColor'>変換</span></span></span>
<span class='t' style='left:1140.0px;top:188px;font-size:12px;line-height:16px;color:#f4f4f4;transform:scaleX(0.7917);transform-origin:0 0;'>FCS</span>
<span class='t' style='left:1140.0px;top:216px;font-size:12px;line-height:16px;color:#f4f4f4;transform:scaleX(0.9127);transform-origin:0 0;'>OPC UA</span>
<span class='t' style='left:1140.0px;top:244px;font-size:12px;line-height:16px;color:#f4f4f4;transform:scaleX(0.8569);transform-origin:0 0;'>ST<span style='display:inline-block;width:29.0px'><span style='display:inline-block;font-size:15.0px;transform:scaleX(0.644);transform-origin:0 0;position:relative;top:-1px;-webkit-text-stroke:0.25px currentColor'>ツール</span></span></span>
<span class='t' style='left:1140.0px;top:272px;font-size:12px;line-height:16px;color:#f4f4f4;transform:scaleX(0.9524);transform-origin:0 0;'><span style='display:inline-block;width:38.0px'><span style='display:inline-block;font-size:15.0px;transform:scaleX(0.633);transform-origin:0 0;position:relative;top:-1px;-webkit-text-stroke:0.25px currentColor'>アナログ</span></span><span style='display:inline-block;width:25.0px'><span style='display:inline-block;font-size:13.0px;transform:scaleX(0.962);transform-origin:0 0;position:relative;top:-1px;-webkit-text-stroke:0.25px currentColor'>制御</span></span></span>
<span class='t' style='left:1140.0px;top:300px;font-size:12px;line-height:16px;color:#f4f4f4;transform:scaleX(0.9211);transform-origin:0 0;'><span style='display:inline-block;width:38.0px'><span style='display:inline-block;font-size:15.0px;transform:scaleX(0.633);transform-origin:0 0;position:relative;top:-1px;-webkit-text-stroke:0.25px currentColor'>カウンタ</span></span></span>
<span class='t' style='left:1140.0px;top:328px;font-size:12px;line-height:16px;color:#f4f4f4;transform:scaleX(0.9315);transform-origin:0 0;'><span style='display:inline-block;width:48.0px'><span style='display:inline-block;font-size:15.0px;transform:scaleX(0.640);transform-origin:0 0;position:relative;top:-1px;-webkit-text-stroke:0.25px currentColor'>シーケンス</span></span><span style='display:inline-block;width:25.0px'><span style='display:inline-block;font-size:13.0px;transform:scaleX(0.962);transform-origin:0 0;position:relative;top:-1px;-webkit-text-stroke:0.25px currentColor'>出力</span></span></span>
<span class='t' style='left:1140.0px;top:356px;font-size:12px;line-height:16px;color:#f4f4f4;transform:scaleX(0.9315);transform-origin:0 0;'><span style='display:inline-block;width:48.0px'><span style='display:inline-block;font-size:15.0px;transform:scaleX(0.640);transform-origin:0 0;position:relative;top:-1px;-webkit-text-stroke:0.25px currentColor'>シーケンス</span></span><span style='display:inline-block;width:25.0px'><span style='display:inline-block;font-size:13.0px;transform:scaleX(0.962);transform-origin:0 0;position:relative;top:-1px;-webkit-text-stroke:0.25px currentColor'>制御</span></span></span>
<span class='t' style='left:1140.0px;top:384px;font-size:12px;line-height:16px;color:#f4f4f4;transform:scaleX(0.9315);transform-origin:0 0;'><span style='display:inline-block;width:48.0px'><span style='display:inline-block;font-size:15.0px;transform:scaleX(0.640);transform-origin:0 0;position:relative;top:-1px;-webkit-text-stroke:0.25px currentColor'>シーケンス</span></span><span style='display:inline-block;width:25.0px'><span style='display:inline-block;font-size:13.0px;transform:scaleX(0.962);transform-origin:0 0;position:relative;top:-1px;-webkit-text-stroke:0.25px currentColor'>入力</span></span></span>
<span class='t' style='left:1140.0px;top:412px;font-size:12px;line-height:16px;color:#f4f4f4;transform:scaleX(0.9683);transform-origin:0 0;'><span style='display:inline-block;width:38.0px'><span style='display:inline-block;font-size:15.0px;transform:scaleX(0.633);transform-origin:0 0;position:relative;top:-1px;-webkit-text-stroke:0.25px currentColor'>システム</span></span><span style='display:inline-block;width:25.0px'><span style='display:inline-block;font-size:13.0px;transform:scaleX(0.962);transform-origin:0 0;position:relative;top:-1px;-webkit-text-stroke:0.25px currentColor'>制御</span></span></span>
<span class='t' style='left:1140.0px;top:440px;font-size:12px;line-height:16px;color:#f4f4f4;transform:scaleX(0.9123);transform-origin:0 0;'><span style='display:inline-block;width:28.5px'><span style='display:inline-block;font-size:15.0px;transform:scaleX(0.633);transform-origin:0 0;position:relative;top:-1px;-webkit-text-stroke:0.25px currentColor'>シフト</span></span></span>
<span class='t' style='left:1140.0px;top:468px;font-size:12px;line-height:16px;color:#f4f4f4;transform:scaleX(0.9116);transform-origin:0 0;'><span style='display:inline-block;width:73.5px'><span style='display:inline-block;font-size:15.0px;transform:scaleX(0.613);transform-origin:0 0;position:relative;top:-1px;-webkit-text-stroke:0.25px currentColor'>シミュレーション</span></span></span>
<span class='t' style='left:1140.0px;top:496px;font-size:12px;line-height:16px;color:#f4f4f4;transform:scaleX(0.9333);transform-origin:0 0;'><span style='display:inline-block;width:75.0px'><span style='display:inline-block;font-size:15.0px;transform:scaleX(0.625);transform-origin:0 0;position:relative;top:-1px;-webkit-text-stroke:0.25px currentColor'>スタックテーブル</span></span></span>
<span class='t' style='left:1140.0px;top:524px;font-size:12px;line-height:16px;color:#f4f4f4;transform:scaleX(0.9524);transform-origin:0 0;'><span style='display:inline-block;width:19.0px'><span style='display:inline-block;font-size:15.0px;transform:scaleX(0.633);transform-origin:0 0;position:relative;top:-1px;-webkit-text-stroke:0.25px currentColor'>その</span></span><span style='display:inline-block;width:12.5px'><span style='display:inline-block;font-size:13.0px;transform:scaleX(0.962);transform-origin:0 0;position:relative;top:-1px;-webkit-text-stroke:0.25px currentColor'>他</span></span></span>
<span class='t' style='left:1140.0px;top:552px;font-size:12px;line-height:16px;color:#f4f4f4;transform:scaleX(0.9123);transform-origin:0 0;'><span style='display:inline-block;width:28.5px'><span style='display:inline-block;font-size:15.0px;transform:scaleX(0.633);transform-origin:0 0;position:relative;top:-1px;-webkit-text-stroke:0.25px currentColor'>タイマ</span></span></span>
<span class='t' style='left:1140.0px;top:580px;font-size:12px;line-height:16px;color:#f4f4f4;transform:scaleX(0.9474);transform-origin:0 0;'><span style='display:inline-block;width:66.5px'><span style='display:inline-block;font-size:15.0px;transform:scaleX(0.633);transform-origin:0 0;position:relative;top:-1px;-webkit-text-stroke:0.25px currentColor'>タイムスタンプ</span></span></span>
<span class='t' style='left:1140.0px;top:608px;font-size:12px;line-height:16px;color:#f4f4f4;transform:scaleX(0.9323);transform-origin:0 0;'><span style='display:inline-block;width:29.0px'><span style='display:inline-block;font-size:15.0px;transform:scaleX(0.644);transform-origin:0 0;position:relative;top:-1px;-webkit-text-stroke:0.25px currentColor'>データ</span></span><span style='display:inline-block;width:37.5px'><span style='display:inline-block;font-size:13.0px;transform:scaleX(0.962);transform-origin:0 0;position:relative;top:-1px;-webkit-text-stroke:0.25px currentColor'>型変換</span></span></span>
<span class='t' style='left:1140.0px;top:636px;font-size:12px;line-height:16px;color:#f4f4f4;transform:scaleX(0.9259);transform-origin:0 0;'><span style='display:inline-block;width:29.0px'><span style='display:inline-block;font-size:15.0px;transform:scaleX(0.644);transform-origin:0 0;position:relative;top:-1px;-webkit-text-stroke:0.25px currentColor'>データ</span></span><span style='display:inline-block;width:25.0px'><span style='display:inline-block;font-size:13.0px;transform:scaleX(0.962);transform-origin:0 0;position:relative;top:-1px;-webkit-text-stroke:0.25px currentColor'>転送</span></span></span>
<div class='a' style='left:1116px;top:639px;width:198px;height:2px;background:#8a8a8c'></div>
<div class='a' style='left:1116px;top:641px;width:198px;height:102px;background:#4a4a4e'></div>
<div class='a' style='left:206px;top:126px;width:7px;height:618px;background:#000'></div>
</body></html>
